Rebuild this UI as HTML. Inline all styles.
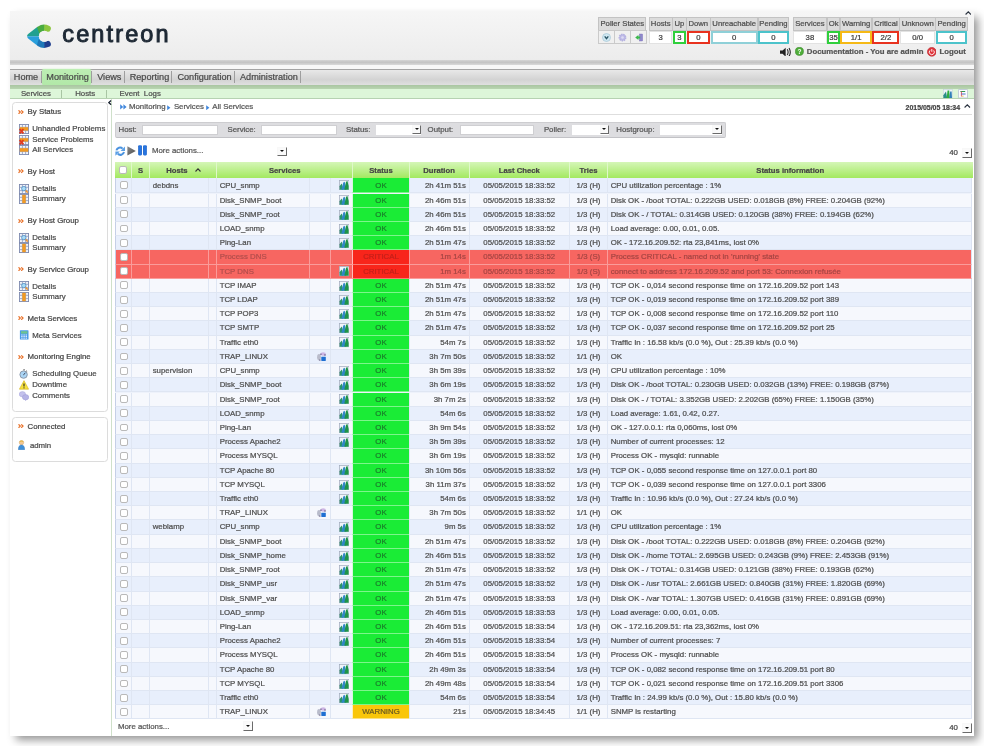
<!DOCTYPE html><html><head><meta charset="utf-8"><title>Centreon - IT &amp; Network Monitoring</title><style>
*{box-sizing:border-box;margin:0;padding:0}
html,body{width:984px;height:746px;overflow:hidden;background:#fff}
body{position:relative;font-family:"Liberation Sans",Arial,Helvetica,sans-serif;font-size:7.83px;color:#4a4a4a;line-height:1;-webkit-text-stroke-width:.22px}
.a{position:absolute;white-space:nowrap}
.win{left:10px;top:10.5px;width:964px;height:725.5px;background:#fff;box-shadow:4.5px 4.5px 8.5px -1px rgba(0,0,0,.42)}
.hdr{left:10px;top:10.5px;width:964px;height:50.5px;background:linear-gradient(#f6f6f6,#ececec)}
.hl1{left:10px;top:60.4px;width:964px;height:4.2px;background:linear-gradient(#d6d6d6,#c3c3c3 45%,#dadada)}
.hl2{left:10px;top:64.6px;width:964px;height:4.6px;background:#f8f8f8}
.menu{left:10px;top:68.9px;width:964px;height:16.3px;background:linear-gradient(#e8e8e8,#d3d3d3 65%,#e0e0e0);border-top:.9px solid #a4a4a4}
.mon{left:41.6px;top:69.4px;width:49.4px;height:15.8px;background:linear-gradient(#bdeeb4,#b2e8a8);border-radius:1.5px;box-shadow:0 0 1.5px #b9ecb0}
.mi{top:71.7px;font-size:9.15px;color:#4a4a4a;line-height:11px}
.msep{top:71.2px;width:1.1px;height:11.6px;background:#9e9e9e}
.dg{left:10px;top:85.2px;width:964px;height:3.7px;background:linear-gradient(#a9c5a1,#b9d5b1)}
.sub{left:10px;top:88.9px;width:964px;height:9.9px;background:#ddf6d9;border-bottom:.8px solid #b6d2b2}
.si{top:89.3px;line-height:9px;color:#4f4f4f}
.ssep{top:90.2px;width:1px;height:7.6px;background:#a9c5a4}
.vline{left:111.2px;top:99px;width:1px;height:637px;background:#cfe0ca}
.box{left:11.6px;width:96.6px;border:1px solid #dcdcdc;border-radius:3.5px;background:#fff}
.sh{left:27.6px;line-height:10px;height:10px;color:#444}
.sa{left:18px;line-height:10px;height:10px;color:#f07820;font-weight:bold;font-size:8.4px}
.st{left:32.2px;line-height:10px;height:10px;color:#4a4a4a}
.ico{left:19.2px;width:10px;height:10px}
.bc{top:102px;line-height:10px;color:#555}
.fbar{left:114.5px;top:121.7px;width:611.4px;height:16.4px;background:#dddde0;border:1px solid #cdcdd0;border-bottom-color:#c2c2c6;border-radius:2px}
.fl{top:124.7px;line-height:10px;color:#555}
.inp{top:124.6px;height:10.6px;background:#fff;border:1px solid #cfcfd2}
.sel{top:124.6px;height:10.6px;background:#fff}
.arr{width:9.6px;height:9.6px;background:#fafafa;border-right:1.2px solid #6a6a6a;border-bottom:1.2px solid #6a6a6a;border-left:.6px solid #f8f8f8;border-top:.6px solid #f8f8f8}
.arr:after{content:"";position:absolute;left:1.7px;top:2.5px;border-left:2.2px solid transparent;border-right:2.2px solid transparent;border-top:2.4px solid #111}
.th{top:161.7px;height:16.0px;background:linear-gradient(#d5f6b8,#a3e960);font-weight:bold;color:#454545;text-align:center;line-height:18.8px;font-size:7.7px;border-left:1px solid #dff8c9}
.r{left:115.4px;width:857.1px}
.r0{background:#e8effc}
.r1{background:#f6f8fd}
.rc{background:#f76661}
.c{position:absolute;top:0;height:100%;border-left:1px solid #dfe6f3;border-bottom:1px solid #dfe6f3;white-space:nowrap;overflow:hidden;color:#4e4e4e}
.rc .c{border-color:#fa9c9a;color:#a54543}
.rc .c.sv{color:#b24e4c}
.c.l{padding-left:2.7px}
.c.ce{text-align:center}
.c.ri{text-align:right;padding-right:2.7px}
.ok{background:#1aec36;color:#1b7e2b;border-left-color:#d9f7df;border-bottom-color:#7df58c}
.cr{background:#f8251b;color:#c4201a !important;border-left-color:#fbb !important;border-bottom-color:#fa7a74 !important}
.wa{background:#f9c60a;color:#6a5a20;border-left-color:#fdf0c0;border-bottom-color:#fbe080}
.cb{position:absolute;left:3.5px;width:7.9px;height:7.8px;border:1px solid #b9b9b9;border-radius:2px;background:#fff}
.g{position:absolute;left:8px;width:10.2px;height:10.2px}
.t{position:absolute;left:7.6px;width:9.5px;height:9.5px}
.hs{top:17.2px;height:13.4px;background:#dcdcdc;border:1px solid #c3c3c3;color:#4e4e4e;text-align:center;line-height:11.6px;font-size:7.7px}
.hv{top:30.8px;height:12.8px;background:#fff;border:1.7px solid #e2e2e2;color:#3c3c3c;text-align:center;line-height:11px;font-size:7.7px}
</style></head><body><div class="a" style="left:0;top:0;width:984px;height:746px;will-change:transform">
<div class="a win"></div><div class="a hdr"></div><div class="a hl1"></div><div class="a hl2"></div><div class="a menu"></div><div class="a mon"></div>
<svg class="a" style="left:25px;top:22.5px" width="28" height="27" viewBox="25 22.5 28 27">
<defs><mask id="lm"><path d="M47.7 28.1 A8.6 8.6 0 0 0 39.4 28.8 L30.4 35.8 L39.4 42.8 A8.6 8.6 0 0 0 47.7 43.5" fill="none" stroke="#fff" stroke-width="6.3" stroke-linejoin="round" stroke-linecap="round"/><polygon points="30.4,35.8 39.4,28.8 39.4,42.8" fill="#fff"/><circle cx="44.3" cy="35.8" r="5.45" fill="#000"/></mask></defs>
<g mask="url(#lm)">
<rect x="25" y="22" width="28" height="13.8" fill="#21a08f"/>
<rect x="25" y="35.8" width="28" height="14" fill="#2a9fdb"/>
<polygon points="35.2,22 44.2,22 44,31 39.6,33.4" fill="#4aab40"/>
<polygon points="44.2,22 53,22 53,35 44,31" fill="#8dc63f"/>
<polygon points="38.6,38.8 44.3,40 44.3,50 35.4,50" fill="#1e78b9"/>
<polygon points="44.3,38 53,36.5 53,50 44.3,50" fill="#1f3e8e"/>
</g></svg>
<div class="a" style="left:62.3px;top:19.4px;font-size:23.5px;line-height:30px;color:#1d2834;letter-spacing:2.12px;-webkit-text-stroke:.95px #1d2834">centreon</div>
<div class="a mi" style="left:13.8px">Home</div>
<div class="a mi" style="left:46.3px">Monitoring</div>
<div class="a mi" style="left:97.2px">Views</div>
<div class="a mi" style="left:129.7px">Reporting</div>
<div class="a mi" style="left:177.4px">Configuration</div>
<div class="a mi" style="left:240px">Administration</div>
<div class="a msep" style="left:40.8px"></div>
<div class="a msep" style="left:90.5px"></div>
<div class="a msep" style="left:123.5px"></div>
<div class="a msep" style="left:170.8px"></div>
<div class="a msep" style="left:233.5px"></div>
<div class="a msep" style="left:300.3px"></div>
<div class="a dg"></div><div class="a sub"></div>
<div class="a si" style="left:20.9px">Services</div>
<div class="a si" style="left:75.2px">Hosts</div>
<div class="a si" style="left:119.5px">Event&nbsp; Logs</div>
<div class="a ssep" style="left:61.1px"></div>
<div class="a ssep" style="left:105.8px"></div>
<div class="a hs" style="left:598.1px;width:48.4px">Poller States</div>
<div class="a hv" style="left:598.1px;top:29.8px;height:14.6px;width:17.1px;background:#f0f0f0;border:1px solid #cacaca"></div>
<div class="a hv" style="left:614.2px;top:29.8px;height:14.6px;width:17.1px;background:#f0f0f0;border:1px solid #cacaca"></div>
<div class="a hv" style="left:630.3px;top:29.8px;height:14.6px;width:17.1px;background:#f0f0f0;border:1px solid #cacaca"></div>
<svg class="a" style="left:601.6px;top:32.6px" width="9" height="9" viewBox="0 0 9 9"><circle cx="4.5" cy="4.5" r="4" fill="#cfe7f1" stroke="#a3c6d6" stroke-width=".7"/><path d="M2.7 3.4 L4.5 5.6 L6.3 3.4" fill="none" stroke="#2a5666" stroke-width="1.4"/></svg>
<svg class="a" style="left:617.7px;top:32.6px" width="9" height="9" viewBox="0 0 9 9"><circle cx="4.5" cy="4.5" r="3.2" fill="#bdb9e6" stroke="#b3afe0" stroke-width="1.5" stroke-dasharray="1.4 .8"/><circle cx="4.5" cy="4.5" r="1.3" fill="#dddbf3"/></svg>
<svg class="a" style="left:633.6px;top:32.6px" width="9.5" height="9" viewBox="0 0 9.5 9"><rect x="5.4" y="1" width="3.2" height="7" fill="#9088cc" stroke="#7a70b8" stroke-width=".4"/><path d="M1.2 4.5 L4.4 2 V3.5 H6.2 V5.5 H4.4 V7 Z" fill="#3ab84c"/></svg>
<div class="a hs" style="left:648.5px;width:24.4px">Hosts</div>
<div class="a hv" style="left:649.0px;width:23.4px;">3</div>
<div class="a hs" style="left:672.3px;width:14.3px">Up</div>
<div class="a hv" style="left:672.8px;width:13.3px;border-color:#2fcf3c;border-width:2px;line-height:10.4px;">3</div>
<div class="a hs" style="left:686px;width:24.6px">Down</div>
<div class="a hv" style="left:686.5px;width:23.6px;border-color:#e8321f;border-width:2px;line-height:10.4px;">0</div>
<div class="a hs" style="left:710px;width:48.3px">Unreachable</div>
<div class="a hv" style="left:710.5px;width:47.3px;border-color:#8fd0d8;border-width:2px;line-height:10.4px;">0</div>
<div class="a hs" style="left:757.7px;width:31.5px">Pending</div>
<div class="a hv" style="left:758.2px;width:30.5px;border-color:#4cc3cb;border-width:2px;line-height:10.4px;">0</div>
<div class="a hs" style="left:792.5px;width:34.8px">Services</div>
<div class="a hv" style="left:793.0px;width:33.8px;">38</div>
<div class="a hs" style="left:826.7px;width:13.8px">Ok</div>
<div class="a hv" style="left:827.2px;width:12.8px;border-color:#2fcf3c;border-width:2px;line-height:10.4px;">35</div>
<div class="a hs" style="left:839.9px;width:32.5px">Warning</div>
<div class="a hv" style="left:840.4px;width:31.5px;border-color:#f5b916;border-width:2px;line-height:10.4px;">1/1</div>
<div class="a hs" style="left:871.8px;width:28.2px">Critical</div>
<div class="a hv" style="left:872.3px;width:27.2px;border-color:#e8321f;border-width:2px;line-height:10.4px;">2/2</div>
<div class="a hs" style="left:899.4px;width:36.6px">Unknown</div>
<div class="a hv" style="left:899.9px;width:35.6px;">0/0</div>
<div class="a hs" style="left:935.4px;width:32.4px">Pending</div>
<div class="a hv" style="left:935.9px;width:31.4px;border-color:#4cc3cb;border-width:2px;line-height:10.4px;">0</div>
<svg class="a" style="left:964.6px;top:11.4px" width="6.6" height="4" viewBox="0 0 6.6 4"><path d="M.6 3.5 L3.3 .8 L6 3.5" fill="none" stroke="#2a3340" stroke-width="1.1"/></svg>
<svg class="a" style="left:780.2px;top:47.4px" width="11.6" height="9" viewBox="0 0 9 7"><path d="M0 2.7 H2 L4.4 .5 V7.5 L2 5.3 H0Z" fill="#222"/><path d="M5.6 1.8 Q7 4 5.6 6.2 M7 .8 Q9 4 7 7.2" fill="none" stroke="#222" stroke-width=".8"/></svg>
<svg class="a" style="left:795.4px;top:47.4px" width="8.8" height="8.8" viewBox="0 0 8.6 8.6"><circle cx="4.3" cy="4.3" r="4" fill="#4fae3a" stroke="#357f28" stroke-width=".5"/><text x="4.3" y="6.6" font-size="6.4" font-weight="bold" text-anchor="middle" fill="#fff" font-family="Liberation Sans, sans-serif">?</text></svg>
<div class="a" style="left:806.8px;top:47px;line-height:10px;font-weight:bold;color:#555;font-size:7.8px">Documentation - You are admin</div>
<svg class="a" style="left:926.6px;top:47.2px" width="9.6" height="9.6" viewBox="0 0 9.6 9.6"><circle cx="4.8" cy="4.8" r="4.4" fill="#e0353b" stroke="#b52228" stroke-width=".6"/><path d="M3 3.4 A2.5 2.5 0 1 0 6.6 3.4" fill="none" stroke="#fff" stroke-width=".9"/><path d="M4.8 2 V4.8" stroke="#fff" stroke-width=".9"/></svg>
<div class="a" style="left:939.5px;top:47px;line-height:10px;font-weight:bold;color:#555;font-size:7.8px">Logout</div>
<svg class="a" style="left:943.4px;top:89.4px" width="10" height="9" viewBox="0 0 10 9"><rect x=".3" y=".3" width="9" height="8.6" fill="#eef3f8" stroke="#b6c6d6" stroke-width=".4"/><path d="M.4 9 V6.2 L3 2.6 L4.2 9Z" fill="#2a8f86"/><path d="M3.6 9 L4.6 1.6 H6.2 L6.8 9Z" fill="#2fae3e"/><path d="M6.2 9 L7.2 2.6 H8.6 L9 9Z" fill="#2f7fb8"/></svg>
<svg class="a" style="left:957.6px;top:89.4px" width="10" height="9" viewBox="0 0 10 9"><rect x=".4" y=".4" width="9.2" height="8.6" rx="1" fill="#fbfcfe" stroke="#a9b3cc" stroke-width=".7"/><path d="M2.4 2.5 H7.2" stroke="#2f9a4e" stroke-width="1"/><path d="M3.4 2.5 V7.4" stroke="#d8455a" stroke-width=".9"/><path d="M3.4 5 H7.6" stroke="#3a62c4" stroke-width=".9"/><path d="M3.4 7.2 H5.6" stroke="#e8c050" stroke-width=".9"/></svg>
<div class="a vline"></div>
<div class="a box" style="top:102.2px;height:309.8px"></div>
<div class="a box" style="top:417px;height:45.2px"></div>
<svg class="a" style="left:108.2px;top:99.8px" width="3.6" height="5.2" viewBox="0 0 3.6 5.2"><path d="M3.1 .5 L.8 2.6 L3.1 4.7" fill="none" stroke="#141e2c" stroke-width="1.3"/></svg>
<svg class="a" style="left:18px;top:110.0px" width="5.8" height="4.2" viewBox="0 0 5.8 4.2"><path d="M.5 .4 L2.3 2.1 L.5 3.8 M3.2 .4 L5 2.1 L3.2 3.8" fill="none" stroke="#e9722a" stroke-width="1.25"/></svg><div class="a sh" style="top:107.4px">By Status</div>
<svg class="a ico" style="top:123.9px" viewBox="0 0 10 10"><rect x=".45" y=".45" width="9.1" height="9.1" fill="#f4f6fb" stroke="#7e8aae" stroke-width=".9"/><path d="M.4 3.3H9.6M.4 6.6H9.6M3.4 .4V9.6M6.6 .4V9.6" stroke="#8c98ba" stroke-width=".8"/><rect x=".8" y="3.2" width="8.4" height="3.4" fill="#f29a22"/><path d="M.6 5 L4.4 9.4 M4.4 5 L.6 9.4" stroke="#e23a1e" stroke-width="1.9"/></svg>
<div class="a st" style="top:124.2px">Unhandled Problems</div>
<svg class="a ico" style="top:134.6px" viewBox="0 0 10 10"><rect x=".45" y=".45" width="9.1" height="9.1" fill="#f4f6fb" stroke="#7e8aae" stroke-width=".9"/><path d="M.4 3.3H9.6M.4 6.6H9.6M3.4 .4V9.6M6.6 .4V9.6" stroke="#8c98ba" stroke-width=".8"/><rect x=".8" y="3.2" width="8.4" height="3.4" fill="#f29a22"/><path d="M.6 5 L4.4 9.4 M4.4 5 L.6 9.4" stroke="#e23a1e" stroke-width="1.9"/></svg>
<div class="a st" style="top:134.9px">Service Problems</div>
<svg class="a ico" style="top:145.1px" viewBox="0 0 10 10"><rect x=".45" y=".45" width="9.1" height="9.1" fill="#f4f6fb" stroke="#7e8aae" stroke-width=".9"/><path d="M.4 3.3H9.6M.4 6.6H9.6M3.4 .4V9.6M6.6 .4V9.6" stroke="#8c98ba" stroke-width=".8"/><rect x=".8" y="3.2" width="8.4" height="3.5" fill="#f29a22"/></svg>
<div class="a st" style="top:145.4px">All Services</div>
<svg class="a" style="left:18px;top:169.4px" width="5.8" height="4.2" viewBox="0 0 5.8 4.2"><path d="M.5 .4 L2.3 2.1 L.5 3.8 M3.2 .4 L5 2.1 L3.2 3.8" fill="none" stroke="#e9722a" stroke-width="1.25"/></svg><div class="a sh" style="top:166.8px">By Host</div>
<svg class="a ico" style="top:183.5px" viewBox="0 0 10 10"><rect x=".45" y=".45" width="9.1" height="9.1" fill="#f4f6fb" stroke="#7e8aae" stroke-width=".9"/><path d="M.4 3.3H9.6M.4 6.6H9.6M3.4 .4V9.6M6.6 .4V9.6" stroke="#8c98ba" stroke-width=".8"/><circle cx="4.8" cy="4.6" r="2.2" fill="#a9dcf6" stroke="#4f8fc8" stroke-width=".8"/><path d="M6.6 6.4 L8.8 8.6" stroke="#e8963a" stroke-width="1.5"/></svg>
<div class="a st" style="top:183.8px">Details</div>
<svg class="a ico" style="top:194.1px" viewBox="0 0 10 10"><rect x=".45" y=".45" width="9.1" height="9.1" fill="#f4f6fb" stroke="#7e8aae" stroke-width=".9"/><path d="M.4 3.3H9.6M.4 6.6H9.6M3.4 .4V9.6M6.6 .4V9.6" stroke="#8c98ba" stroke-width=".8"/><rect x="3.3" y=".8" width="3.4" height="8.4" fill="#f29a22"/></svg>
<div class="a st" style="top:194.4px">Summary</div>
<svg class="a" style="left:18px;top:218.5px" width="5.8" height="4.2" viewBox="0 0 5.8 4.2"><path d="M.5 .4 L2.3 2.1 L.5 3.8 M3.2 .4 L5 2.1 L3.2 3.8" fill="none" stroke="#e9722a" stroke-width="1.25"/></svg><div class="a sh" style="top:215.9px">By Host Group</div>
<svg class="a ico" style="top:232.6px" viewBox="0 0 10 10"><rect x=".45" y=".45" width="9.1" height="9.1" fill="#f4f6fb" stroke="#7e8aae" stroke-width=".9"/><path d="M.4 3.3H9.6M.4 6.6H9.6M3.4 .4V9.6M6.6 .4V9.6" stroke="#8c98ba" stroke-width=".8"/><circle cx="4.8" cy="4.6" r="2.2" fill="#a9dcf6" stroke="#4f8fc8" stroke-width=".8"/><path d="M6.6 6.4 L8.8 8.6" stroke="#e8963a" stroke-width="1.5"/></svg>
<div class="a st" style="top:232.9px">Details</div>
<svg class="a ico" style="top:243.1px" viewBox="0 0 10 10"><rect x=".45" y=".45" width="9.1" height="9.1" fill="#f4f6fb" stroke="#7e8aae" stroke-width=".9"/><path d="M.4 3.3H9.6M.4 6.6H9.6M3.4 .4V9.6M6.6 .4V9.6" stroke="#8c98ba" stroke-width=".8"/><rect x="3.3" y=".8" width="3.4" height="8.4" fill="#f29a22"/></svg>
<div class="a st" style="top:243.4px">Summary</div>
<svg class="a" style="left:18px;top:267.2px" width="5.8" height="4.2" viewBox="0 0 5.8 4.2"><path d="M.5 .4 L2.3 2.1 L.5 3.8 M3.2 .4 L5 2.1 L3.2 3.8" fill="none" stroke="#e9722a" stroke-width="1.25"/></svg><div class="a sh" style="top:264.6px">By Service Group</div>
<svg class="a ico" style="top:281.3px" viewBox="0 0 10 10"><rect x=".45" y=".45" width="9.1" height="9.1" fill="#f4f6fb" stroke="#7e8aae" stroke-width=".9"/><path d="M.4 3.3H9.6M.4 6.6H9.6M3.4 .4V9.6M6.6 .4V9.6" stroke="#8c98ba" stroke-width=".8"/><circle cx="4.8" cy="4.6" r="2.2" fill="#a9dcf6" stroke="#4f8fc8" stroke-width=".8"/><path d="M6.6 6.4 L8.8 8.6" stroke="#e8963a" stroke-width="1.5"/></svg>
<div class="a st" style="top:281.6px">Details</div>
<svg class="a ico" style="top:292px" viewBox="0 0 10 10"><rect x=".45" y=".45" width="9.1" height="9.1" fill="#f4f6fb" stroke="#7e8aae" stroke-width=".9"/><path d="M.4 3.3H9.6M.4 6.6H9.6M3.4 .4V9.6M6.6 .4V9.6" stroke="#8c98ba" stroke-width=".8"/><rect x="3.3" y=".8" width="3.4" height="8.4" fill="#f29a22"/></svg>
<div class="a st" style="top:292.3px">Summary</div>
<svg class="a" style="left:18px;top:316.3px" width="5.8" height="4.2" viewBox="0 0 5.8 4.2"><path d="M.5 .4 L2.3 2.1 L.5 3.8 M3.2 .4 L5 2.1 L3.2 3.8" fill="none" stroke="#e9722a" stroke-width="1.25"/></svg><div class="a sh" style="top:313.7px">Meta Services</div>
<svg class="a ico" style="top:330.4px" viewBox="0 0 10 10"><rect x=".9" y=".2" width="8.6" height="9.4" rx=".6" fill="#4a9ae8"/><rect x="2" y="1.2" width="6.4" height="2.4" fill="#6fc48e"/><path d="M2.2 5H8.2M2.2 6.6H8.2M2.2 8.2H8.2" stroke="#eaf4fd" stroke-width="1" stroke-dasharray="1.4 .8"/></svg>
<div class="a st" style="top:330.7px">Meta Services</div>
<svg class="a" style="left:18px;top:354.9px" width="5.8" height="4.2" viewBox="0 0 5.8 4.2"><path d="M.5 .4 L2.3 2.1 L.5 3.8 M3.2 .4 L5 2.1 L3.2 3.8" fill="none" stroke="#e9722a" stroke-width="1.25"/></svg><div class="a sh" style="top:352.3px">Monitoring Engine</div>
<svg class="a ico" style="top:368.9px" viewBox="0 0 10 10"><circle cx="4.6" cy="5.6" r="3.7" fill="#aad4f4" stroke="#8a98aa" stroke-width="1"/><path d="M4.2 .8 H6 M7 1.6 L8.2 2.6" stroke="#777" stroke-width="1"/><path d="M4.4 5.8 L6.4 4" stroke="#223" stroke-width=".9"/></svg>
<div class="a st" style="top:369.2px">Scheduling Queue</div>
<svg class="a ico" style="top:379.7px" viewBox="0 0 10 10"><path d="M5 .6 L9.6 9.2 H.4Z" fill="#f6e23e" stroke="#d4b420" stroke-width=".6" stroke-linejoin="round"/><path d="M5 3.4V6.4" stroke="#222" stroke-width="1.1"/><circle cx="5" cy="7.8" r=".6" fill="#222"/></svg>
<div class="a st" style="top:380.0px">Downtime</div>
<svg class="a ico" style="top:390.5px" viewBox="0 0 10 10"><ellipse cx="3.4" cy="3.2" rx="3.2" ry="2.6" fill="#c4c2ec" stroke="#a8a6dc" stroke-width=".5"/><ellipse cx="6.6" cy="6.2" rx="3.2" ry="2.6" fill="#b6b4e6" stroke="#9c9ad6" stroke-width=".5"/><path d="M6 8.4 L6.6 10 L7.8 8.4Z" fill="#a8a6dc"/></svg>
<div class="a st" style="top:390.8px">Comments</div>
<svg class="a" style="left:18px;top:424.2px" width="5.8" height="4.2" viewBox="0 0 5.8 4.2"><path d="M.5 .4 L2.3 2.1 L.5 3.8 M3.2 .4 L5 2.1 L3.2 3.8" fill="none" stroke="#e9722a" stroke-width="1.25"/></svg><div class="a sh" style="top:421.6px">Connected</div>
<svg class="a" style="left:18.4px;top:439.8px" width="7" height="10" viewBox="0 0 7 10"><circle cx="3.5" cy="2.6" r="2.2" fill="#f3c893" stroke="#c9904a" stroke-width=".4"/><path d="M.3 9.7 Q.3 5 3.5 5 Q6.7 5 6.7 9.7Z" fill="#3f8fd8" stroke="#2a6fb0" stroke-width=".4"/><path d="M1.2 2 Q3.5 -.8 5.8 2 Q3.5 1 1.2 2Z" fill="#e0b53a"/></svg>
<div class="a st" style="left:29.9px;top:440.8px">admin</div>
<svg class="a" style="left:119.8px;top:104.4px" width="6.8" height="5.8" viewBox="0 0 6.8 5.8"><path d="M.2 .2 L3.2 2.9 L.2 5.6Z M3.4 .2 L6.6 2.9 L3.4 5.6Z" fill="#3f86dc"/></svg>
<div class="a bc" style="left:129px">Monitoring</div>
<svg class="a" style="left:167.4px;top:104.6px" width="3.6" height="5.4" viewBox="0 0 3.6 5.4"><path d="M.2 .2 L3.4 2.7 L.2 5.2Z" fill="#3f86dc"/></svg>
<div class="a bc" style="left:173.9px">Services</div>
<svg class="a" style="left:206.2px;top:104.6px" width="3.6" height="5.4" viewBox="0 0 3.6 5.4"><path d="M.2 .2 L3.4 2.7 L.2 5.2Z" fill="#3f86dc"/></svg>
<div class="a bc" style="left:212.3px">All Services</div>
<div class="a" style="left:905.6px;top:103.2px;line-height:10px;font-weight:bold;font-size:6.95px;color:#444">2015/05/05 18:34</div>
<svg class="a" style="left:964.4px;top:103.6px" width="6.6" height="4" viewBox="0 0 6.6 4"><path d="M.6 3.5 L3.3 .8 L6 3.5" fill="none" stroke="#2a3340" stroke-width="1.1"/></svg>
<div class="a" style="left:114.6px;top:114px;width:857.6px;height:1px;background:#dedede"></div>
<div class="a fbar"></div>
<div class="a fl" style="left:118.5px">Host:</div>
<div class="a fl" style="left:227.5px">Service:</div>
<div class="a fl" style="left:346.1px">Status:</div>
<div class="a fl" style="left:427.6px">Output:</div>
<div class="a fl" style="left:543.9px">Poller:</div>
<div class="a fl" style="left:616.3px">Hostgroup:</div>
<div class="a inp" style="left:142.1px;width:75.6px"></div>
<div class="a inp" style="left:261.4px;width:75.2px"></div>
<div class="a inp" style="left:459.6px;width:74.1px"></div>
<div class="a sel" style="left:375.6px;width:45.9px"></div><div class="a arr" style="left:411.9px;top:124.8px"></div>
<div class="a sel" style="left:571.8px;width:37.6px"></div><div class="a arr" style="left:599.8px;top:124.8px"></div>
<div class="a sel" style="left:659.7px;width:62.3px"></div><div class="a arr" style="left:712.4px;top:124.8px"></div>
<svg class="a" style="left:115px;top:145.6px" width="10.4" height="10.4" viewBox="0 0 10.4 10.4"><path d="M1.4 4.4 A3.7 3.7 0 0 1 7.6 2.6" fill="none" stroke="#4b93df" stroke-width="2"/><path d="M10 .6 V5 H5.6Z" fill="#5a9fe6"/><path d="M9 6 A3.7 3.7 0 0 1 2.8 7.8" fill="none" stroke="#4b93df" stroke-width="2"/><path d="M.4 9.8 V5.4 H4.8Z" fill="#5a9fe6"/></svg>
<svg class="a" style="left:127.2px;top:146px" width="9" height="9.8" viewBox="0 0 9 9.8"><defs><linearGradient id="plg" x1="0" x2="1" y1="0" y2="1"><stop offset="0" stop-color="#8a8a8a"/><stop offset="1" stop-color="#4c4c4c"/></linearGradient></defs><path d="M.4 .2 L8.8 4.9 L.4 9.6Z" fill="url(#plg)"/></svg>
<svg class="a" style="left:138.3px;top:145.4px" width="9" height="10.6" viewBox="0 0 9 10.4" preserveAspectRatio="none"><defs><linearGradient id="pg" x1="0" x2="1" y1="0" y2="0"><stop offset="0" stop-color="#0f57c4"/><stop offset=".5" stop-color="#2f80ea"/><stop offset="1" stop-color="#0f57c4"/></linearGradient></defs><rect x=".2" y=".2" width="3.7" height="10" rx="1" fill="url(#pg)"/><rect x="5.1" y=".2" width="3.7" height="10" rx="1" fill="url(#pg)"/></svg>
<div class="a" style="left:152px;top:146.3px;line-height:10px;color:#555">More actions...</div>
<div class="a arr" style="left:277.2px;top:146.6px"></div>
<div class="a" style="left:949.2px;top:147.6px;line-height:10px;color:#444">40</div>
<div class="a arr" style="left:962.4px;top:148.2px"></div>
<div class="a" style="left:118px;top:721.9px;line-height:10px;color:#555">More actions...</div>
<div class="a arr" style="left:243.2px;top:721.4px"></div>
<div class="a" style="left:949.2px;top:722.8px;line-height:10px;color:#444">40</div>
<div class="a arr" style="left:962.4px;top:723.3px"></div>
<div class="a th" style="left:115.4px;width:15.6px;border-left:none"><span class="cb" style="top:4.3px"></span></div>
<div class="a th" style="left:131.0px;width:18.0px;">S</div>
<div class="a th" style="left:149.0px;width:67.0px;padding-left:1px">Hosts <svg width="6" height="4" viewBox="0 0 6 4" style="margin-left:5px;margin-bottom:1px"><path d="M.5 3.5 L3 .9 L5.5 3.5" fill="none" stroke="#333" stroke-width="1.1"/></svg></div>
<div class="a th" style="left:216.0px;width:136.4px;">Services</div>
<div class="a th" style="left:352.4px;width:56.2px;">Status</div>
<div class="a th" style="left:408.6px;width:60.0px;">Duration</div>
<div class="a th" style="left:468.6px;width:100.4px;">Last Check</div>
<div class="a th" style="left:569.0px;width:38.0px;">Tries</div>
<div class="a th" style="left:607.0px;width:365.5px;">Status information</div>
<div class="a" style="left:115.4px;top:177.7px;width:857.1px;height:541.25px;background:#eef2fb"></div>
<div class="a r r0" style="top:177.70px;height:15.8px;line-height:16.00px">
<div class="c " style="left:0.0px;width:15.6px;border-left-color:#c5cfe6"><span class="cb" style="top:3.50px"></span></div>
<div class="c " style="left:15.6px;width:18.0px;"></div>
<div class="c l" style="left:33.6px;width:58.7px;">debdns</div>
<div class="c " style="left:92.3px;width:8.3px;"></div>
<div class="c l sv" style="left:100.6px;width:92.8px;">CPU_snmp</div>
<div class="c " style="left:193.4px;width:20.9px;"></div>
<div class="c " style="left:214.3px;width:22.7px;"><svg class="g" style="top:2.60px" viewBox="0 0 10.4 11" preserveAspectRatio="none"><rect x=".3" y=".3" width="9.8" height="10.4" fill="#f1f4fa" stroke="#a8b4c8" stroke-width=".5"/><path d="M.5 10.6 V6.8 L2.8 3.8 L4.8 10.6Z" fill="#2a9468"/><path d="M2.4 10.6 L4.4 2.6 L5.8 1.8 L7.6 10.6Z" fill="#2f86c6"/><path d="M5.4 10.6 L7.2 2 L8.6 1.2 L9.9 6.5 V10.6Z" fill="#1f9448"/><path d="M.3 .3 H10.1 M.3 .3 V10.7" stroke="#9098ac" stroke-width=".5" fill="none"/></svg></div>
<div class="c ce ok" style="left:237.0px;width:56.2px;">OK</div>
<div class="c ri" style="left:293.2px;width:60.0px;">2h 41m 51s</div>
<div class="c ce" style="left:353.2px;width:100.4px;">05/05/2015 18:33:52</div>
<div class="c ce" style="left:453.6px;width:38.0px;">1/3 (H)</div>
<div class="c l" style="left:491.6px;width:365.5px;border-right:1px solid #dbe2f1">CPU utilization percentage : 1%</div>
</div>
<div class="a r r1" style="top:193.50px;height:14.215px;line-height:13.81px">
<div class="c " style="left:0.0px;width:15.6px;border-left-color:#c5cfe6"><span class="cb" style="top:2.71px"></span></div>
<div class="c " style="left:15.6px;width:18.0px;"></div>
<div class="c l" style="left:33.6px;width:58.7px;"></div>
<div class="c " style="left:92.3px;width:8.3px;"></div>
<div class="c l sv" style="left:100.6px;width:92.8px;">Disk_SNMP_boot</div>
<div class="c " style="left:193.4px;width:20.9px;"></div>
<div class="c " style="left:214.3px;width:22.7px;"><svg class="g" style="top:1.81px" viewBox="0 0 10.4 11" preserveAspectRatio="none"><rect x=".3" y=".3" width="9.8" height="10.4" fill="#f1f4fa" stroke="#a8b4c8" stroke-width=".5"/><path d="M.5 10.6 V6.8 L2.8 3.8 L4.8 10.6Z" fill="#2a9468"/><path d="M2.4 10.6 L4.4 2.6 L5.8 1.8 L7.6 10.6Z" fill="#2f86c6"/><path d="M5.4 10.6 L7.2 2 L8.6 1.2 L9.9 6.5 V10.6Z" fill="#1f9448"/><path d="M.3 .3 H10.1 M.3 .3 V10.7" stroke="#9098ac" stroke-width=".5" fill="none"/></svg></div>
<div class="c ce ok" style="left:237.0px;width:56.2px;">OK</div>
<div class="c ri" style="left:293.2px;width:60.0px;">2h 46m 51s</div>
<div class="c ce" style="left:353.2px;width:100.4px;">05/05/2015 18:33:52</div>
<div class="c ce" style="left:453.6px;width:38.0px;">1/3 (H)</div>
<div class="c l" style="left:491.6px;width:365.5px;border-right:1px solid #dbe2f1">Disk OK - /boot TOTAL: 0.222GB USED: 0.018GB (8%) FREE: 0.204GB (92%)</div>
</div>
<div class="a r r0" style="top:207.72px;height:14.215px;line-height:13.81px">
<div class="c " style="left:0.0px;width:15.6px;border-left-color:#c5cfe6"><span class="cb" style="top:2.71px"></span></div>
<div class="c " style="left:15.6px;width:18.0px;"></div>
<div class="c l" style="left:33.6px;width:58.7px;"></div>
<div class="c " style="left:92.3px;width:8.3px;"></div>
<div class="c l sv" style="left:100.6px;width:92.8px;">Disk_SNMP_root</div>
<div class="c " style="left:193.4px;width:20.9px;"></div>
<div class="c " style="left:214.3px;width:22.7px;"><svg class="g" style="top:1.81px" viewBox="0 0 10.4 11" preserveAspectRatio="none"><rect x=".3" y=".3" width="9.8" height="10.4" fill="#f1f4fa" stroke="#a8b4c8" stroke-width=".5"/><path d="M.5 10.6 V6.8 L2.8 3.8 L4.8 10.6Z" fill="#2a9468"/><path d="M2.4 10.6 L4.4 2.6 L5.8 1.8 L7.6 10.6Z" fill="#2f86c6"/><path d="M5.4 10.6 L7.2 2 L8.6 1.2 L9.9 6.5 V10.6Z" fill="#1f9448"/><path d="M.3 .3 H10.1 M.3 .3 V10.7" stroke="#9098ac" stroke-width=".5" fill="none"/></svg></div>
<div class="c ce ok" style="left:237.0px;width:56.2px;">OK</div>
<div class="c ri" style="left:293.2px;width:60.0px;">2h 46m 51s</div>
<div class="c ce" style="left:353.2px;width:100.4px;">05/05/2015 18:33:52</div>
<div class="c ce" style="left:453.6px;width:38.0px;">1/3 (H)</div>
<div class="c l" style="left:491.6px;width:365.5px;border-right:1px solid #dbe2f1">Disk OK - / TOTAL: 0.314GB USED: 0.120GB (38%) FREE: 0.194GB (62%)</div>
</div>
<div class="a r r1" style="top:221.93px;height:14.215px;line-height:13.81px">
<div class="c " style="left:0.0px;width:15.6px;border-left-color:#c5cfe6"><span class="cb" style="top:2.71px"></span></div>
<div class="c " style="left:15.6px;width:18.0px;"></div>
<div class="c l" style="left:33.6px;width:58.7px;"></div>
<div class="c " style="left:92.3px;width:8.3px;"></div>
<div class="c l sv" style="left:100.6px;width:92.8px;">LOAD_snmp</div>
<div class="c " style="left:193.4px;width:20.9px;"></div>
<div class="c " style="left:214.3px;width:22.7px;"><svg class="g" style="top:1.81px" viewBox="0 0 10.4 11" preserveAspectRatio="none"><rect x=".3" y=".3" width="9.8" height="10.4" fill="#f1f4fa" stroke="#a8b4c8" stroke-width=".5"/><path d="M.5 10.6 V6.8 L2.8 3.8 L4.8 10.6Z" fill="#2a9468"/><path d="M2.4 10.6 L4.4 2.6 L5.8 1.8 L7.6 10.6Z" fill="#2f86c6"/><path d="M5.4 10.6 L7.2 2 L8.6 1.2 L9.9 6.5 V10.6Z" fill="#1f9448"/><path d="M.3 .3 H10.1 M.3 .3 V10.7" stroke="#9098ac" stroke-width=".5" fill="none"/></svg></div>
<div class="c ce ok" style="left:237.0px;width:56.2px;">OK</div>
<div class="c ri" style="left:293.2px;width:60.0px;">2h 46m 51s</div>
<div class="c ce" style="left:353.2px;width:100.4px;">05/05/2015 18:33:52</div>
<div class="c ce" style="left:453.6px;width:38.0px;">1/3 (H)</div>
<div class="c l" style="left:491.6px;width:365.5px;border-right:1px solid #dbe2f1">Load average: 0.00, 0.01, 0.05.</div>
</div>
<div class="a r r0" style="top:236.15px;height:14.215px;line-height:13.81px">
<div class="c " style="left:0.0px;width:15.6px;border-left-color:#c5cfe6"><span class="cb" style="top:2.71px"></span></div>
<div class="c " style="left:15.6px;width:18.0px;"></div>
<div class="c l" style="left:33.6px;width:58.7px;"></div>
<div class="c " style="left:92.3px;width:8.3px;"></div>
<div class="c l sv" style="left:100.6px;width:92.8px;">Ping-Lan</div>
<div class="c " style="left:193.4px;width:20.9px;"></div>
<div class="c " style="left:214.3px;width:22.7px;"><svg class="g" style="top:1.81px" viewBox="0 0 10.4 11" preserveAspectRatio="none"><rect x=".3" y=".3" width="9.8" height="10.4" fill="#f1f4fa" stroke="#a8b4c8" stroke-width=".5"/><path d="M.5 10.6 V6.8 L2.8 3.8 L4.8 10.6Z" fill="#2a9468"/><path d="M2.4 10.6 L4.4 2.6 L5.8 1.8 L7.6 10.6Z" fill="#2f86c6"/><path d="M5.4 10.6 L7.2 2 L8.6 1.2 L9.9 6.5 V10.6Z" fill="#1f9448"/><path d="M.3 .3 H10.1 M.3 .3 V10.7" stroke="#9098ac" stroke-width=".5" fill="none"/></svg></div>
<div class="c ce ok" style="left:237.0px;width:56.2px;">OK</div>
<div class="c ri" style="left:293.2px;width:60.0px;">2h 51m 47s</div>
<div class="c ce" style="left:353.2px;width:100.4px;">05/05/2015 18:33:52</div>
<div class="c ce" style="left:453.6px;width:38.0px;">1/3 (H)</div>
<div class="c l" style="left:491.6px;width:365.5px;border-right:1px solid #dbe2f1">OK - 172.16.209.52: rta 23,841ms, lost 0%</div>
</div>
<div class="a r rc" style="top:250.36px;height:14.215px;line-height:13.81px">
<div class="c " style="left:0.0px;width:15.6px;border-left-color:#c5cfe6"><span class="cb" style="top:2.71px"></span></div>
<div class="c " style="left:15.6px;width:18.0px;"></div>
<div class="c l" style="left:33.6px;width:58.7px;"></div>
<div class="c " style="left:92.3px;width:8.3px;"></div>
<div class="c l sv" style="left:100.6px;width:92.8px;">Process DNS</div>
<div class="c " style="left:193.4px;width:20.9px;"></div>
<div class="c " style="left:214.3px;width:22.7px;"></div>
<div class="c ce cr" style="left:237.0px;width:56.2px;">CRITICAL</div>
<div class="c ri" style="left:293.2px;width:60.0px;">1m 14s</div>
<div class="c ce" style="left:353.2px;width:100.4px;">05/05/2015 18:33:52</div>
<div class="c ce" style="left:453.6px;width:38.0px;">1/3 (S)</div>
<div class="c l" style="left:491.6px;width:365.5px;border-right:1px solid #dbe2f1">Process CRITICAL - named not in 'running' state</div>
</div>
<div class="a r rc" style="top:264.57px;height:14.215px;line-height:13.81px">
<div class="c " style="left:0.0px;width:15.6px;border-left-color:#c5cfe6"><span class="cb" style="top:2.71px"></span></div>
<div class="c " style="left:15.6px;width:18.0px;"></div>
<div class="c l" style="left:33.6px;width:58.7px;"></div>
<div class="c " style="left:92.3px;width:8.3px;"></div>
<div class="c l sv" style="left:100.6px;width:92.8px;">TCP DNS</div>
<div class="c " style="left:193.4px;width:20.9px;"></div>
<div class="c " style="left:214.3px;width:22.7px;"><svg class="g" style="top:1.81px" viewBox="0 0 10.4 11" preserveAspectRatio="none"><rect x=".3" y=".3" width="9.8" height="10.4" fill="#f1f4fa" stroke="#a8b4c8" stroke-width=".5"/><path d="M.5 10.6 V6.8 L2.8 3.8 L4.8 10.6Z" fill="#2a9468"/><path d="M2.4 10.6 L4.4 2.6 L5.8 1.8 L7.6 10.6Z" fill="#2f86c6"/><path d="M5.4 10.6 L7.2 2 L8.6 1.2 L9.9 6.5 V10.6Z" fill="#1f9448"/><path d="M.3 .3 H10.1 M.3 .3 V10.7" stroke="#9098ac" stroke-width=".5" fill="none"/></svg></div>
<div class="c ce cr" style="left:237.0px;width:56.2px;">CRITICAL</div>
<div class="c ri" style="left:293.2px;width:60.0px;">1m 14s</div>
<div class="c ce" style="left:353.2px;width:100.4px;">05/05/2015 18:33:52</div>
<div class="c ce" style="left:453.6px;width:38.0px;">1/3 (S)</div>
<div class="c l" style="left:491.6px;width:365.5px;border-right:1px solid #dbe2f1">connect to address 172.16.209.52 and port 53: Connexion refusée</div>
</div>
<div class="a r r1" style="top:278.79px;height:14.215px;line-height:13.81px">
<div class="c " style="left:0.0px;width:15.6px;border-left-color:#c5cfe6"><span class="cb" style="top:2.71px"></span></div>
<div class="c " style="left:15.6px;width:18.0px;"></div>
<div class="c l" style="left:33.6px;width:58.7px;"></div>
<div class="c " style="left:92.3px;width:8.3px;"></div>
<div class="c l sv" style="left:100.6px;width:92.8px;">TCP IMAP</div>
<div class="c " style="left:193.4px;width:20.9px;"></div>
<div class="c " style="left:214.3px;width:22.7px;"><svg class="g" style="top:1.81px" viewBox="0 0 10.4 11" preserveAspectRatio="none"><rect x=".3" y=".3" width="9.8" height="10.4" fill="#f1f4fa" stroke="#a8b4c8" stroke-width=".5"/><path d="M.5 10.6 V6.8 L2.8 3.8 L4.8 10.6Z" fill="#2a9468"/><path d="M2.4 10.6 L4.4 2.6 L5.8 1.8 L7.6 10.6Z" fill="#2f86c6"/><path d="M5.4 10.6 L7.2 2 L8.6 1.2 L9.9 6.5 V10.6Z" fill="#1f9448"/><path d="M.3 .3 H10.1 M.3 .3 V10.7" stroke="#9098ac" stroke-width=".5" fill="none"/></svg></div>
<div class="c ce ok" style="left:237.0px;width:56.2px;">OK</div>
<div class="c ri" style="left:293.2px;width:60.0px;">2h 51m 47s</div>
<div class="c ce" style="left:353.2px;width:100.4px;">05/05/2015 18:33:52</div>
<div class="c ce" style="left:453.6px;width:38.0px;">1/3 (H)</div>
<div class="c l" style="left:491.6px;width:365.5px;border-right:1px solid #dbe2f1">TCP OK - 0,014 second response time on 172.16.209.52 port 143</div>
</div>
<div class="a r r0" style="top:293.00px;height:14.215px;line-height:13.81px">
<div class="c " style="left:0.0px;width:15.6px;border-left-color:#c5cfe6"><span class="cb" style="top:2.71px"></span></div>
<div class="c " style="left:15.6px;width:18.0px;"></div>
<div class="c l" style="left:33.6px;width:58.7px;"></div>
<div class="c " style="left:92.3px;width:8.3px;"></div>
<div class="c l sv" style="left:100.6px;width:92.8px;">TCP LDAP</div>
<div class="c " style="left:193.4px;width:20.9px;"></div>
<div class="c " style="left:214.3px;width:22.7px;"><svg class="g" style="top:1.81px" viewBox="0 0 10.4 11" preserveAspectRatio="none"><rect x=".3" y=".3" width="9.8" height="10.4" fill="#f1f4fa" stroke="#a8b4c8" stroke-width=".5"/><path d="M.5 10.6 V6.8 L2.8 3.8 L4.8 10.6Z" fill="#2a9468"/><path d="M2.4 10.6 L4.4 2.6 L5.8 1.8 L7.6 10.6Z" fill="#2f86c6"/><path d="M5.4 10.6 L7.2 2 L8.6 1.2 L9.9 6.5 V10.6Z" fill="#1f9448"/><path d="M.3 .3 H10.1 M.3 .3 V10.7" stroke="#9098ac" stroke-width=".5" fill="none"/></svg></div>
<div class="c ce ok" style="left:237.0px;width:56.2px;">OK</div>
<div class="c ri" style="left:293.2px;width:60.0px;">2h 51m 47s</div>
<div class="c ce" style="left:353.2px;width:100.4px;">05/05/2015 18:33:52</div>
<div class="c ce" style="left:453.6px;width:38.0px;">1/3 (H)</div>
<div class="c l" style="left:491.6px;width:365.5px;border-right:1px solid #dbe2f1">TCP OK - 0,019 second response time on 172.16.209.52 port 389</div>
</div>
<div class="a r r1" style="top:307.22px;height:14.215px;line-height:13.81px">
<div class="c " style="left:0.0px;width:15.6px;border-left-color:#c5cfe6"><span class="cb" style="top:2.71px"></span></div>
<div class="c " style="left:15.6px;width:18.0px;"></div>
<div class="c l" style="left:33.6px;width:58.7px;"></div>
<div class="c " style="left:92.3px;width:8.3px;"></div>
<div class="c l sv" style="left:100.6px;width:92.8px;">TCP POP3</div>
<div class="c " style="left:193.4px;width:20.9px;"></div>
<div class="c " style="left:214.3px;width:22.7px;"><svg class="g" style="top:1.81px" viewBox="0 0 10.4 11" preserveAspectRatio="none"><rect x=".3" y=".3" width="9.8" height="10.4" fill="#f1f4fa" stroke="#a8b4c8" stroke-width=".5"/><path d="M.5 10.6 V6.8 L2.8 3.8 L4.8 10.6Z" fill="#2a9468"/><path d="M2.4 10.6 L4.4 2.6 L5.8 1.8 L7.6 10.6Z" fill="#2f86c6"/><path d="M5.4 10.6 L7.2 2 L8.6 1.2 L9.9 6.5 V10.6Z" fill="#1f9448"/><path d="M.3 .3 H10.1 M.3 .3 V10.7" stroke="#9098ac" stroke-width=".5" fill="none"/></svg></div>
<div class="c ce ok" style="left:237.0px;width:56.2px;">OK</div>
<div class="c ri" style="left:293.2px;width:60.0px;">2h 51m 47s</div>
<div class="c ce" style="left:353.2px;width:100.4px;">05/05/2015 18:33:52</div>
<div class="c ce" style="left:453.6px;width:38.0px;">1/3 (H)</div>
<div class="c l" style="left:491.6px;width:365.5px;border-right:1px solid #dbe2f1">TCP OK - 0,008 second response time on 172.16.209.52 port 110</div>
</div>
<div class="a r r0" style="top:321.43px;height:14.215px;line-height:13.81px">
<div class="c " style="left:0.0px;width:15.6px;border-left-color:#c5cfe6"><span class="cb" style="top:2.71px"></span></div>
<div class="c " style="left:15.6px;width:18.0px;"></div>
<div class="c l" style="left:33.6px;width:58.7px;"></div>
<div class="c " style="left:92.3px;width:8.3px;"></div>
<div class="c l sv" style="left:100.6px;width:92.8px;">TCP SMTP</div>
<div class="c " style="left:193.4px;width:20.9px;"></div>
<div class="c " style="left:214.3px;width:22.7px;"><svg class="g" style="top:1.81px" viewBox="0 0 10.4 11" preserveAspectRatio="none"><rect x=".3" y=".3" width="9.8" height="10.4" fill="#f1f4fa" stroke="#a8b4c8" stroke-width=".5"/><path d="M.5 10.6 V6.8 L2.8 3.8 L4.8 10.6Z" fill="#2a9468"/><path d="M2.4 10.6 L4.4 2.6 L5.8 1.8 L7.6 10.6Z" fill="#2f86c6"/><path d="M5.4 10.6 L7.2 2 L8.6 1.2 L9.9 6.5 V10.6Z" fill="#1f9448"/><path d="M.3 .3 H10.1 M.3 .3 V10.7" stroke="#9098ac" stroke-width=".5" fill="none"/></svg></div>
<div class="c ce ok" style="left:237.0px;width:56.2px;">OK</div>
<div class="c ri" style="left:293.2px;width:60.0px;">2h 51m 47s</div>
<div class="c ce" style="left:353.2px;width:100.4px;">05/05/2015 18:33:52</div>
<div class="c ce" style="left:453.6px;width:38.0px;">1/3 (H)</div>
<div class="c l" style="left:491.6px;width:365.5px;border-right:1px solid #dbe2f1">TCP OK - 0,037 second response time on 172.16.209.52 port 25</div>
</div>
<div class="a r r1" style="top:335.65px;height:14.215px;line-height:13.81px">
<div class="c " style="left:0.0px;width:15.6px;border-left-color:#c5cfe6"><span class="cb" style="top:2.71px"></span></div>
<div class="c " style="left:15.6px;width:18.0px;"></div>
<div class="c l" style="left:33.6px;width:58.7px;"></div>
<div class="c " style="left:92.3px;width:8.3px;"></div>
<div class="c l sv" style="left:100.6px;width:92.8px;">Traffic eth0</div>
<div class="c " style="left:193.4px;width:20.9px;"></div>
<div class="c " style="left:214.3px;width:22.7px;"><svg class="g" style="top:1.81px" viewBox="0 0 10.4 11" preserveAspectRatio="none"><rect x=".3" y=".3" width="9.8" height="10.4" fill="#f1f4fa" stroke="#a8b4c8" stroke-width=".5"/><path d="M.5 10.6 V6.8 L2.8 3.8 L4.8 10.6Z" fill="#2a9468"/><path d="M2.4 10.6 L4.4 2.6 L5.8 1.8 L7.6 10.6Z" fill="#2f86c6"/><path d="M5.4 10.6 L7.2 2 L8.6 1.2 L9.9 6.5 V10.6Z" fill="#1f9448"/><path d="M.3 .3 H10.1 M.3 .3 V10.7" stroke="#9098ac" stroke-width=".5" fill="none"/></svg></div>
<div class="c ce ok" style="left:237.0px;width:56.2px;">OK</div>
<div class="c ri" style="left:293.2px;width:60.0px;">54m 7s</div>
<div class="c ce" style="left:353.2px;width:100.4px;">05/05/2015 18:33:52</div>
<div class="c ce" style="left:453.6px;width:38.0px;">1/3 (H)</div>
<div class="c l" style="left:491.6px;width:365.5px;border-right:1px solid #dbe2f1">Traffic In : 16.58 kb/s (0.0 %), Out : 25.39 kb/s (0.0 %)</div>
</div>
<div class="a r r0" style="top:349.86px;height:14.215px;line-height:13.81px">
<div class="c " style="left:0.0px;width:15.6px;border-left-color:#c5cfe6"><span class="cb" style="top:2.71px"></span></div>
<div class="c " style="left:15.6px;width:18.0px;"></div>
<div class="c l" style="left:33.6px;width:58.7px;"></div>
<div class="c " style="left:92.3px;width:8.3px;"></div>
<div class="c l sv" style="left:100.6px;width:92.8px;">TRAP_LINUX</div>
<div class="c " style="left:193.4px;width:20.9px;"><svg class="t" style="top:2.06px" viewBox="0 0 9.5 9.5"><ellipse cx="2" cy="5.2" rx="1.9" ry="3.1" fill="#b9bccb"/><ellipse cx="6.2" cy="2" rx="2.7" ry="1.7" fill="#cdb6e4"/><circle cx="3.9" cy="2.2" r=".6" fill="#4a3a6a"/><circle cx="8" cy="3" r=".7" fill="#4a3a6a"/><circle cx="2.9" cy="8.1" r=".6" fill="#3a2a5a"/><rect x="4.3" y="4.7" width="4.5" height="4.2" rx=".4" fill="#1f6fd2"/></svg></div>
<div class="c " style="left:214.3px;width:22.7px;"></div>
<div class="c ce ok" style="left:237.0px;width:56.2px;">OK</div>
<div class="c ri" style="left:293.2px;width:60.0px;">3h 7m 50s</div>
<div class="c ce" style="left:353.2px;width:100.4px;">05/05/2015 18:33:52</div>
<div class="c ce" style="left:453.6px;width:38.0px;">1/1 (H)</div>
<div class="c l" style="left:491.6px;width:365.5px;border-right:1px solid #dbe2f1">OK</div>
</div>
<div class="a r r1" style="top:364.08px;height:14.215px;line-height:13.81px">
<div class="c " style="left:0.0px;width:15.6px;border-left-color:#c5cfe6"><span class="cb" style="top:2.71px"></span></div>
<div class="c " style="left:15.6px;width:18.0px;"></div>
<div class="c l" style="left:33.6px;width:58.7px;">supervision</div>
<div class="c " style="left:92.3px;width:8.3px;"></div>
<div class="c l sv" style="left:100.6px;width:92.8px;">CPU_snmp</div>
<div class="c " style="left:193.4px;width:20.9px;"></div>
<div class="c " style="left:214.3px;width:22.7px;"><svg class="g" style="top:1.81px" viewBox="0 0 10.4 11" preserveAspectRatio="none"><rect x=".3" y=".3" width="9.8" height="10.4" fill="#f1f4fa" stroke="#a8b4c8" stroke-width=".5"/><path d="M.5 10.6 V6.8 L2.8 3.8 L4.8 10.6Z" fill="#2a9468"/><path d="M2.4 10.6 L4.4 2.6 L5.8 1.8 L7.6 10.6Z" fill="#2f86c6"/><path d="M5.4 10.6 L7.2 2 L8.6 1.2 L9.9 6.5 V10.6Z" fill="#1f9448"/><path d="M.3 .3 H10.1 M.3 .3 V10.7" stroke="#9098ac" stroke-width=".5" fill="none"/></svg></div>
<div class="c ce ok" style="left:237.0px;width:56.2px;">OK</div>
<div class="c ri" style="left:293.2px;width:60.0px;">3h 5m 39s</div>
<div class="c ce" style="left:353.2px;width:100.4px;">05/05/2015 18:33:52</div>
<div class="c ce" style="left:453.6px;width:38.0px;">1/3 (H)</div>
<div class="c l" style="left:491.6px;width:365.5px;border-right:1px solid #dbe2f1">CPU utilization percentage : 10%</div>
</div>
<div class="a r r0" style="top:378.29px;height:14.215px;line-height:13.81px">
<div class="c " style="left:0.0px;width:15.6px;border-left-color:#c5cfe6"><span class="cb" style="top:2.71px"></span></div>
<div class="c " style="left:15.6px;width:18.0px;"></div>
<div class="c l" style="left:33.6px;width:58.7px;"></div>
<div class="c " style="left:92.3px;width:8.3px;"></div>
<div class="c l sv" style="left:100.6px;width:92.8px;">Disk_SNMP_boot</div>
<div class="c " style="left:193.4px;width:20.9px;"></div>
<div class="c " style="left:214.3px;width:22.7px;"><svg class="g" style="top:1.81px" viewBox="0 0 10.4 11" preserveAspectRatio="none"><rect x=".3" y=".3" width="9.8" height="10.4" fill="#f1f4fa" stroke="#a8b4c8" stroke-width=".5"/><path d="M.5 10.6 V6.8 L2.8 3.8 L4.8 10.6Z" fill="#2a9468"/><path d="M2.4 10.6 L4.4 2.6 L5.8 1.8 L7.6 10.6Z" fill="#2f86c6"/><path d="M5.4 10.6 L7.2 2 L8.6 1.2 L9.9 6.5 V10.6Z" fill="#1f9448"/><path d="M.3 .3 H10.1 M.3 .3 V10.7" stroke="#9098ac" stroke-width=".5" fill="none"/></svg></div>
<div class="c ce ok" style="left:237.0px;width:56.2px;">OK</div>
<div class="c ri" style="left:293.2px;width:60.0px;">3h 6m 19s</div>
<div class="c ce" style="left:353.2px;width:100.4px;">05/05/2015 18:33:52</div>
<div class="c ce" style="left:453.6px;width:38.0px;">1/3 (H)</div>
<div class="c l" style="left:491.6px;width:365.5px;border-right:1px solid #dbe2f1">Disk OK - /boot TOTAL: 0.230GB USED: 0.032GB (13%) FREE: 0.198GB (87%)</div>
</div>
<div class="a r r1" style="top:392.51px;height:14.215px;line-height:13.81px">
<div class="c " style="left:0.0px;width:15.6px;border-left-color:#c5cfe6"><span class="cb" style="top:2.71px"></span></div>
<div class="c " style="left:15.6px;width:18.0px;"></div>
<div class="c l" style="left:33.6px;width:58.7px;"></div>
<div class="c " style="left:92.3px;width:8.3px;"></div>
<div class="c l sv" style="left:100.6px;width:92.8px;">Disk_SNMP_root</div>
<div class="c " style="left:193.4px;width:20.9px;"></div>
<div class="c " style="left:214.3px;width:22.7px;"><svg class="g" style="top:1.81px" viewBox="0 0 10.4 11" preserveAspectRatio="none"><rect x=".3" y=".3" width="9.8" height="10.4" fill="#f1f4fa" stroke="#a8b4c8" stroke-width=".5"/><path d="M.5 10.6 V6.8 L2.8 3.8 L4.8 10.6Z" fill="#2a9468"/><path d="M2.4 10.6 L4.4 2.6 L5.8 1.8 L7.6 10.6Z" fill="#2f86c6"/><path d="M5.4 10.6 L7.2 2 L8.6 1.2 L9.9 6.5 V10.6Z" fill="#1f9448"/><path d="M.3 .3 H10.1 M.3 .3 V10.7" stroke="#9098ac" stroke-width=".5" fill="none"/></svg></div>
<div class="c ce ok" style="left:237.0px;width:56.2px;">OK</div>
<div class="c ri" style="left:293.2px;width:60.0px;">3h 7m 2s</div>
<div class="c ce" style="left:353.2px;width:100.4px;">05/05/2015 18:33:52</div>
<div class="c ce" style="left:453.6px;width:38.0px;">1/3 (H)</div>
<div class="c l" style="left:491.6px;width:365.5px;border-right:1px solid #dbe2f1">Disk OK - / TOTAL: 3.352GB USED: 2.202GB (65%) FREE: 1.150GB (35%)</div>
</div>
<div class="a r r0" style="top:406.72px;height:14.215px;line-height:13.81px">
<div class="c " style="left:0.0px;width:15.6px;border-left-color:#c5cfe6"><span class="cb" style="top:2.71px"></span></div>
<div class="c " style="left:15.6px;width:18.0px;"></div>
<div class="c l" style="left:33.6px;width:58.7px;"></div>
<div class="c " style="left:92.3px;width:8.3px;"></div>
<div class="c l sv" style="left:100.6px;width:92.8px;">LOAD_snmp</div>
<div class="c " style="left:193.4px;width:20.9px;"></div>
<div class="c " style="left:214.3px;width:22.7px;"><svg class="g" style="top:1.81px" viewBox="0 0 10.4 11" preserveAspectRatio="none"><rect x=".3" y=".3" width="9.8" height="10.4" fill="#f1f4fa" stroke="#a8b4c8" stroke-width=".5"/><path d="M.5 10.6 V6.8 L2.8 3.8 L4.8 10.6Z" fill="#2a9468"/><path d="M2.4 10.6 L4.4 2.6 L5.8 1.8 L7.6 10.6Z" fill="#2f86c6"/><path d="M5.4 10.6 L7.2 2 L8.6 1.2 L9.9 6.5 V10.6Z" fill="#1f9448"/><path d="M.3 .3 H10.1 M.3 .3 V10.7" stroke="#9098ac" stroke-width=".5" fill="none"/></svg></div>
<div class="c ce ok" style="left:237.0px;width:56.2px;">OK</div>
<div class="c ri" style="left:293.2px;width:60.0px;">54m 6s</div>
<div class="c ce" style="left:353.2px;width:100.4px;">05/05/2015 18:33:52</div>
<div class="c ce" style="left:453.6px;width:38.0px;">1/3 (H)</div>
<div class="c l" style="left:491.6px;width:365.5px;border-right:1px solid #dbe2f1">Load average: 1.61, 0.42, 0.27.</div>
</div>
<div class="a r r1" style="top:420.94px;height:14.215px;line-height:13.81px">
<div class="c " style="left:0.0px;width:15.6px;border-left-color:#c5cfe6"><span class="cb" style="top:2.71px"></span></div>
<div class="c " style="left:15.6px;width:18.0px;"></div>
<div class="c l" style="left:33.6px;width:58.7px;"></div>
<div class="c " style="left:92.3px;width:8.3px;"></div>
<div class="c l sv" style="left:100.6px;width:92.8px;">Ping-Lan</div>
<div class="c " style="left:193.4px;width:20.9px;"></div>
<div class="c " style="left:214.3px;width:22.7px;"><svg class="g" style="top:1.81px" viewBox="0 0 10.4 11" preserveAspectRatio="none"><rect x=".3" y=".3" width="9.8" height="10.4" fill="#f1f4fa" stroke="#a8b4c8" stroke-width=".5"/><path d="M.5 10.6 V6.8 L2.8 3.8 L4.8 10.6Z" fill="#2a9468"/><path d="M2.4 10.6 L4.4 2.6 L5.8 1.8 L7.6 10.6Z" fill="#2f86c6"/><path d="M5.4 10.6 L7.2 2 L8.6 1.2 L9.9 6.5 V10.6Z" fill="#1f9448"/><path d="M.3 .3 H10.1 M.3 .3 V10.7" stroke="#9098ac" stroke-width=".5" fill="none"/></svg></div>
<div class="c ce ok" style="left:237.0px;width:56.2px;">OK</div>
<div class="c ri" style="left:293.2px;width:60.0px;">3h 9m 54s</div>
<div class="c ce" style="left:353.2px;width:100.4px;">05/05/2015 18:33:52</div>
<div class="c ce" style="left:453.6px;width:38.0px;">1/3 (H)</div>
<div class="c l" style="left:491.6px;width:365.5px;border-right:1px solid #dbe2f1">OK - 127.0.0.1: rta 0,060ms, lost 0%</div>
</div>
<div class="a r r0" style="top:435.15px;height:14.215px;line-height:13.81px">
<div class="c " style="left:0.0px;width:15.6px;border-left-color:#c5cfe6"><span class="cb" style="top:2.71px"></span></div>
<div class="c " style="left:15.6px;width:18.0px;"></div>
<div class="c l" style="left:33.6px;width:58.7px;"></div>
<div class="c " style="left:92.3px;width:8.3px;"></div>
<div class="c l sv" style="left:100.6px;width:92.8px;">Process Apache2</div>
<div class="c " style="left:193.4px;width:20.9px;"></div>
<div class="c " style="left:214.3px;width:22.7px;"><svg class="g" style="top:1.81px" viewBox="0 0 10.4 11" preserveAspectRatio="none"><rect x=".3" y=".3" width="9.8" height="10.4" fill="#f1f4fa" stroke="#a8b4c8" stroke-width=".5"/><path d="M.5 10.6 V6.8 L2.8 3.8 L4.8 10.6Z" fill="#2a9468"/><path d="M2.4 10.6 L4.4 2.6 L5.8 1.8 L7.6 10.6Z" fill="#2f86c6"/><path d="M5.4 10.6 L7.2 2 L8.6 1.2 L9.9 6.5 V10.6Z" fill="#1f9448"/><path d="M.3 .3 H10.1 M.3 .3 V10.7" stroke="#9098ac" stroke-width=".5" fill="none"/></svg></div>
<div class="c ce ok" style="left:237.0px;width:56.2px;">OK</div>
<div class="c ri" style="left:293.2px;width:60.0px;">3h 5m 39s</div>
<div class="c ce" style="left:353.2px;width:100.4px;">05/05/2015 18:33:52</div>
<div class="c ce" style="left:453.6px;width:38.0px;">1/3 (H)</div>
<div class="c l" style="left:491.6px;width:365.5px;border-right:1px solid #dbe2f1">Number of current processes: 12</div>
</div>
<div class="a r r1" style="top:449.37px;height:14.215px;line-height:13.81px">
<div class="c " style="left:0.0px;width:15.6px;border-left-color:#c5cfe6"><span class="cb" style="top:2.71px"></span></div>
<div class="c " style="left:15.6px;width:18.0px;"></div>
<div class="c l" style="left:33.6px;width:58.7px;"></div>
<div class="c " style="left:92.3px;width:8.3px;"></div>
<div class="c l sv" style="left:100.6px;width:92.8px;">Process MYSQL</div>
<div class="c " style="left:193.4px;width:20.9px;"></div>
<div class="c " style="left:214.3px;width:22.7px;"></div>
<div class="c ce ok" style="left:237.0px;width:56.2px;">OK</div>
<div class="c ri" style="left:293.2px;width:60.0px;">3h 6m 19s</div>
<div class="c ce" style="left:353.2px;width:100.4px;">05/05/2015 18:33:52</div>
<div class="c ce" style="left:453.6px;width:38.0px;">1/3 (H)</div>
<div class="c l" style="left:491.6px;width:365.5px;border-right:1px solid #dbe2f1">Process OK - mysqld: runnable</div>
</div>
<div class="a r r0" style="top:463.58px;height:14.215px;line-height:13.81px">
<div class="c " style="left:0.0px;width:15.6px;border-left-color:#c5cfe6"><span class="cb" style="top:2.71px"></span></div>
<div class="c " style="left:15.6px;width:18.0px;"></div>
<div class="c l" style="left:33.6px;width:58.7px;"></div>
<div class="c " style="left:92.3px;width:8.3px;"></div>
<div class="c l sv" style="left:100.6px;width:92.8px;">TCP Apache 80</div>
<div class="c " style="left:193.4px;width:20.9px;"></div>
<div class="c " style="left:214.3px;width:22.7px;"><svg class="g" style="top:1.81px" viewBox="0 0 10.4 11" preserveAspectRatio="none"><rect x=".3" y=".3" width="9.8" height="10.4" fill="#f1f4fa" stroke="#a8b4c8" stroke-width=".5"/><path d="M.5 10.6 V6.8 L2.8 3.8 L4.8 10.6Z" fill="#2a9468"/><path d="M2.4 10.6 L4.4 2.6 L5.8 1.8 L7.6 10.6Z" fill="#2f86c6"/><path d="M5.4 10.6 L7.2 2 L8.6 1.2 L9.9 6.5 V10.6Z" fill="#1f9448"/><path d="M.3 .3 H10.1 M.3 .3 V10.7" stroke="#9098ac" stroke-width=".5" fill="none"/></svg></div>
<div class="c ce ok" style="left:237.0px;width:56.2px;">OK</div>
<div class="c ri" style="left:293.2px;width:60.0px;">3h 10m 56s</div>
<div class="c ce" style="left:353.2px;width:100.4px;">05/05/2015 18:33:52</div>
<div class="c ce" style="left:453.6px;width:38.0px;">1/3 (H)</div>
<div class="c l" style="left:491.6px;width:365.5px;border-right:1px solid #dbe2f1">TCP OK - 0,055 second response time on 127.0.0.1 port 80</div>
</div>
<div class="a r r1" style="top:477.80px;height:14.215px;line-height:13.81px">
<div class="c " style="left:0.0px;width:15.6px;border-left-color:#c5cfe6"><span class="cb" style="top:2.71px"></span></div>
<div class="c " style="left:15.6px;width:18.0px;"></div>
<div class="c l" style="left:33.6px;width:58.7px;"></div>
<div class="c " style="left:92.3px;width:8.3px;"></div>
<div class="c l sv" style="left:100.6px;width:92.8px;">TCP MYSQL</div>
<div class="c " style="left:193.4px;width:20.9px;"></div>
<div class="c " style="left:214.3px;width:22.7px;"><svg class="g" style="top:1.81px" viewBox="0 0 10.4 11" preserveAspectRatio="none"><rect x=".3" y=".3" width="9.8" height="10.4" fill="#f1f4fa" stroke="#a8b4c8" stroke-width=".5"/><path d="M.5 10.6 V6.8 L2.8 3.8 L4.8 10.6Z" fill="#2a9468"/><path d="M2.4 10.6 L4.4 2.6 L5.8 1.8 L7.6 10.6Z" fill="#2f86c6"/><path d="M5.4 10.6 L7.2 2 L8.6 1.2 L9.9 6.5 V10.6Z" fill="#1f9448"/><path d="M.3 .3 H10.1 M.3 .3 V10.7" stroke="#9098ac" stroke-width=".5" fill="none"/></svg></div>
<div class="c ce ok" style="left:237.0px;width:56.2px;">OK</div>
<div class="c ri" style="left:293.2px;width:60.0px;">3h 11m 37s</div>
<div class="c ce" style="left:353.2px;width:100.4px;">05/05/2015 18:33:52</div>
<div class="c ce" style="left:453.6px;width:38.0px;">1/3 (H)</div>
<div class="c l" style="left:491.6px;width:365.5px;border-right:1px solid #dbe2f1">TCP OK - 0,039 second response time on 127.0.0.1 port 3306</div>
</div>
<div class="a r r0" style="top:492.01px;height:14.215px;line-height:13.81px">
<div class="c " style="left:0.0px;width:15.6px;border-left-color:#c5cfe6"><span class="cb" style="top:2.71px"></span></div>
<div class="c " style="left:15.6px;width:18.0px;"></div>
<div class="c l" style="left:33.6px;width:58.7px;"></div>
<div class="c " style="left:92.3px;width:8.3px;"></div>
<div class="c l sv" style="left:100.6px;width:92.8px;">Traffic eth0</div>
<div class="c " style="left:193.4px;width:20.9px;"></div>
<div class="c " style="left:214.3px;width:22.7px;"><svg class="g" style="top:1.81px" viewBox="0 0 10.4 11" preserveAspectRatio="none"><rect x=".3" y=".3" width="9.8" height="10.4" fill="#f1f4fa" stroke="#a8b4c8" stroke-width=".5"/><path d="M.5 10.6 V6.8 L2.8 3.8 L4.8 10.6Z" fill="#2a9468"/><path d="M2.4 10.6 L4.4 2.6 L5.8 1.8 L7.6 10.6Z" fill="#2f86c6"/><path d="M5.4 10.6 L7.2 2 L8.6 1.2 L9.9 6.5 V10.6Z" fill="#1f9448"/><path d="M.3 .3 H10.1 M.3 .3 V10.7" stroke="#9098ac" stroke-width=".5" fill="none"/></svg></div>
<div class="c ce ok" style="left:237.0px;width:56.2px;">OK</div>
<div class="c ri" style="left:293.2px;width:60.0px;">54m 6s</div>
<div class="c ce" style="left:353.2px;width:100.4px;">05/05/2015 18:33:52</div>
<div class="c ce" style="left:453.6px;width:38.0px;">1/3 (H)</div>
<div class="c l" style="left:491.6px;width:365.5px;border-right:1px solid #dbe2f1">Traffic In : 10.96 kb/s (0.0 %), Out : 27.24 kb/s (0.0 %)</div>
</div>
<div class="a r r1" style="top:506.23px;height:14.215px;line-height:13.81px">
<div class="c " style="left:0.0px;width:15.6px;border-left-color:#c5cfe6"><span class="cb" style="top:2.71px"></span></div>
<div class="c " style="left:15.6px;width:18.0px;"></div>
<div class="c l" style="left:33.6px;width:58.7px;"></div>
<div class="c " style="left:92.3px;width:8.3px;"></div>
<div class="c l sv" style="left:100.6px;width:92.8px;">TRAP_LINUX</div>
<div class="c " style="left:193.4px;width:20.9px;"><svg class="t" style="top:2.06px" viewBox="0 0 9.5 9.5"><ellipse cx="2" cy="5.2" rx="1.9" ry="3.1" fill="#b9bccb"/><ellipse cx="6.2" cy="2" rx="2.7" ry="1.7" fill="#cdb6e4"/><circle cx="3.9" cy="2.2" r=".6" fill="#4a3a6a"/><circle cx="8" cy="3" r=".7" fill="#4a3a6a"/><circle cx="2.9" cy="8.1" r=".6" fill="#3a2a5a"/><rect x="4.3" y="4.7" width="4.5" height="4.2" rx=".4" fill="#1f6fd2"/></svg></div>
<div class="c " style="left:214.3px;width:22.7px;"></div>
<div class="c ce ok" style="left:237.0px;width:56.2px;">OK</div>
<div class="c ri" style="left:293.2px;width:60.0px;">3h 7m 50s</div>
<div class="c ce" style="left:353.2px;width:100.4px;">05/05/2015 18:33:52</div>
<div class="c ce" style="left:453.6px;width:38.0px;">1/1 (H)</div>
<div class="c l" style="left:491.6px;width:365.5px;border-right:1px solid #dbe2f1">OK</div>
</div>
<div class="a r r0" style="top:520.44px;height:14.215px;line-height:13.81px">
<div class="c " style="left:0.0px;width:15.6px;border-left-color:#c5cfe6"><span class="cb" style="top:2.71px"></span></div>
<div class="c " style="left:15.6px;width:18.0px;"></div>
<div class="c l" style="left:33.6px;width:58.7px;">weblamp</div>
<div class="c " style="left:92.3px;width:8.3px;"></div>
<div class="c l sv" style="left:100.6px;width:92.8px;">CPU_snmp</div>
<div class="c " style="left:193.4px;width:20.9px;"></div>
<div class="c " style="left:214.3px;width:22.7px;"><svg class="g" style="top:1.81px" viewBox="0 0 10.4 11" preserveAspectRatio="none"><rect x=".3" y=".3" width="9.8" height="10.4" fill="#f1f4fa" stroke="#a8b4c8" stroke-width=".5"/><path d="M.5 10.6 V6.8 L2.8 3.8 L4.8 10.6Z" fill="#2a9468"/><path d="M2.4 10.6 L4.4 2.6 L5.8 1.8 L7.6 10.6Z" fill="#2f86c6"/><path d="M5.4 10.6 L7.2 2 L8.6 1.2 L9.9 6.5 V10.6Z" fill="#1f9448"/><path d="M.3 .3 H10.1 M.3 .3 V10.7" stroke="#9098ac" stroke-width=".5" fill="none"/></svg></div>
<div class="c ce ok" style="left:237.0px;width:56.2px;">OK</div>
<div class="c ri" style="left:293.2px;width:60.0px;">9m 5s</div>
<div class="c ce" style="left:353.2px;width:100.4px;">05/05/2015 18:33:52</div>
<div class="c ce" style="left:453.6px;width:38.0px;">1/3 (H)</div>
<div class="c l" style="left:491.6px;width:365.5px;border-right:1px solid #dbe2f1">CPU utilization percentage : 1%</div>
</div>
<div class="a r r1" style="top:534.66px;height:14.215px;line-height:13.81px">
<div class="c " style="left:0.0px;width:15.6px;border-left-color:#c5cfe6"><span class="cb" style="top:2.71px"></span></div>
<div class="c " style="left:15.6px;width:18.0px;"></div>
<div class="c l" style="left:33.6px;width:58.7px;"></div>
<div class="c " style="left:92.3px;width:8.3px;"></div>
<div class="c l sv" style="left:100.6px;width:92.8px;">Disk_SNMP_boot</div>
<div class="c " style="left:193.4px;width:20.9px;"></div>
<div class="c " style="left:214.3px;width:22.7px;"><svg class="g" style="top:1.81px" viewBox="0 0 10.4 11" preserveAspectRatio="none"><rect x=".3" y=".3" width="9.8" height="10.4" fill="#f1f4fa" stroke="#a8b4c8" stroke-width=".5"/><path d="M.5 10.6 V6.8 L2.8 3.8 L4.8 10.6Z" fill="#2a9468"/><path d="M2.4 10.6 L4.4 2.6 L5.8 1.8 L7.6 10.6Z" fill="#2f86c6"/><path d="M5.4 10.6 L7.2 2 L8.6 1.2 L9.9 6.5 V10.6Z" fill="#1f9448"/><path d="M.3 .3 H10.1 M.3 .3 V10.7" stroke="#9098ac" stroke-width=".5" fill="none"/></svg></div>
<div class="c ce ok" style="left:237.0px;width:56.2px;">OK</div>
<div class="c ri" style="left:293.2px;width:60.0px;">2h 51m 47s</div>
<div class="c ce" style="left:353.2px;width:100.4px;">05/05/2015 18:33:52</div>
<div class="c ce" style="left:453.6px;width:38.0px;">1/3 (H)</div>
<div class="c l" style="left:491.6px;width:365.5px;border-right:1px solid #dbe2f1">Disk OK - /boot TOTAL: 0.222GB USED: 0.018GB (8%) FREE: 0.204GB (92%)</div>
</div>
<div class="a r r0" style="top:548.87px;height:14.215px;line-height:13.81px">
<div class="c " style="left:0.0px;width:15.6px;border-left-color:#c5cfe6"><span class="cb" style="top:2.71px"></span></div>
<div class="c " style="left:15.6px;width:18.0px;"></div>
<div class="c l" style="left:33.6px;width:58.7px;"></div>
<div class="c " style="left:92.3px;width:8.3px;"></div>
<div class="c l sv" style="left:100.6px;width:92.8px;">Disk_SNMP_home</div>
<div class="c " style="left:193.4px;width:20.9px;"></div>
<div class="c " style="left:214.3px;width:22.7px;"><svg class="g" style="top:1.81px" viewBox="0 0 10.4 11" preserveAspectRatio="none"><rect x=".3" y=".3" width="9.8" height="10.4" fill="#f1f4fa" stroke="#a8b4c8" stroke-width=".5"/><path d="M.5 10.6 V6.8 L2.8 3.8 L4.8 10.6Z" fill="#2a9468"/><path d="M2.4 10.6 L4.4 2.6 L5.8 1.8 L7.6 10.6Z" fill="#2f86c6"/><path d="M5.4 10.6 L7.2 2 L8.6 1.2 L9.9 6.5 V10.6Z" fill="#1f9448"/><path d="M.3 .3 H10.1 M.3 .3 V10.7" stroke="#9098ac" stroke-width=".5" fill="none"/></svg></div>
<div class="c ce ok" style="left:237.0px;width:56.2px;">OK</div>
<div class="c ri" style="left:293.2px;width:60.0px;">2h 46m 51s</div>
<div class="c ce" style="left:353.2px;width:100.4px;">05/05/2015 18:33:52</div>
<div class="c ce" style="left:453.6px;width:38.0px;">1/3 (H)</div>
<div class="c l" style="left:491.6px;width:365.5px;border-right:1px solid #dbe2f1">Disk OK - /home TOTAL: 2.695GB USED: 0.243GB (9%) FREE: 2.453GB (91%)</div>
</div>
<div class="a r r1" style="top:563.09px;height:14.215px;line-height:13.81px">
<div class="c " style="left:0.0px;width:15.6px;border-left-color:#c5cfe6"><span class="cb" style="top:2.71px"></span></div>
<div class="c " style="left:15.6px;width:18.0px;"></div>
<div class="c l" style="left:33.6px;width:58.7px;"></div>
<div class="c " style="left:92.3px;width:8.3px;"></div>
<div class="c l sv" style="left:100.6px;width:92.8px;">Disk_SNMP_root</div>
<div class="c " style="left:193.4px;width:20.9px;"></div>
<div class="c " style="left:214.3px;width:22.7px;"><svg class="g" style="top:1.81px" viewBox="0 0 10.4 11" preserveAspectRatio="none"><rect x=".3" y=".3" width="9.8" height="10.4" fill="#f1f4fa" stroke="#a8b4c8" stroke-width=".5"/><path d="M.5 10.6 V6.8 L2.8 3.8 L4.8 10.6Z" fill="#2a9468"/><path d="M2.4 10.6 L4.4 2.6 L5.8 1.8 L7.6 10.6Z" fill="#2f86c6"/><path d="M5.4 10.6 L7.2 2 L8.6 1.2 L9.9 6.5 V10.6Z" fill="#1f9448"/><path d="M.3 .3 H10.1 M.3 .3 V10.7" stroke="#9098ac" stroke-width=".5" fill="none"/></svg></div>
<div class="c ce ok" style="left:237.0px;width:56.2px;">OK</div>
<div class="c ri" style="left:293.2px;width:60.0px;">2h 51m 47s</div>
<div class="c ce" style="left:353.2px;width:100.4px;">05/05/2015 18:33:52</div>
<div class="c ce" style="left:453.6px;width:38.0px;">1/3 (H)</div>
<div class="c l" style="left:491.6px;width:365.5px;border-right:1px solid #dbe2f1">Disk OK - / TOTAL: 0.314GB USED: 0.121GB (38%) FREE: 0.193GB (62%)</div>
</div>
<div class="a r r0" style="top:577.30px;height:14.215px;line-height:13.81px">
<div class="c " style="left:0.0px;width:15.6px;border-left-color:#c5cfe6"><span class="cb" style="top:2.71px"></span></div>
<div class="c " style="left:15.6px;width:18.0px;"></div>
<div class="c l" style="left:33.6px;width:58.7px;"></div>
<div class="c " style="left:92.3px;width:8.3px;"></div>
<div class="c l sv" style="left:100.6px;width:92.8px;">Disk_SNMP_usr</div>
<div class="c " style="left:193.4px;width:20.9px;"></div>
<div class="c " style="left:214.3px;width:22.7px;"><svg class="g" style="top:1.81px" viewBox="0 0 10.4 11" preserveAspectRatio="none"><rect x=".3" y=".3" width="9.8" height="10.4" fill="#f1f4fa" stroke="#a8b4c8" stroke-width=".5"/><path d="M.5 10.6 V6.8 L2.8 3.8 L4.8 10.6Z" fill="#2a9468"/><path d="M2.4 10.6 L4.4 2.6 L5.8 1.8 L7.6 10.6Z" fill="#2f86c6"/><path d="M5.4 10.6 L7.2 2 L8.6 1.2 L9.9 6.5 V10.6Z" fill="#1f9448"/><path d="M.3 .3 H10.1 M.3 .3 V10.7" stroke="#9098ac" stroke-width=".5" fill="none"/></svg></div>
<div class="c ce ok" style="left:237.0px;width:56.2px;">OK</div>
<div class="c ri" style="left:293.2px;width:60.0px;">2h 51m 47s</div>
<div class="c ce" style="left:353.2px;width:100.4px;">05/05/2015 18:33:52</div>
<div class="c ce" style="left:453.6px;width:38.0px;">1/3 (H)</div>
<div class="c l" style="left:491.6px;width:365.5px;border-right:1px solid #dbe2f1">Disk OK - /usr TOTAL: 2.661GB USED: 0.840GB (31%) FREE: 1.820GB (69%)</div>
</div>
<div class="a r r1" style="top:591.52px;height:14.215px;line-height:13.81px">
<div class="c " style="left:0.0px;width:15.6px;border-left-color:#c5cfe6"><span class="cb" style="top:2.71px"></span></div>
<div class="c " style="left:15.6px;width:18.0px;"></div>
<div class="c l" style="left:33.6px;width:58.7px;"></div>
<div class="c " style="left:92.3px;width:8.3px;"></div>
<div class="c l sv" style="left:100.6px;width:92.8px;">Disk_SNMP_var</div>
<div class="c " style="left:193.4px;width:20.9px;"></div>
<div class="c " style="left:214.3px;width:22.7px;"><svg class="g" style="top:1.81px" viewBox="0 0 10.4 11" preserveAspectRatio="none"><rect x=".3" y=".3" width="9.8" height="10.4" fill="#f1f4fa" stroke="#a8b4c8" stroke-width=".5"/><path d="M.5 10.6 V6.8 L2.8 3.8 L4.8 10.6Z" fill="#2a9468"/><path d="M2.4 10.6 L4.4 2.6 L5.8 1.8 L7.6 10.6Z" fill="#2f86c6"/><path d="M5.4 10.6 L7.2 2 L8.6 1.2 L9.9 6.5 V10.6Z" fill="#1f9448"/><path d="M.3 .3 H10.1 M.3 .3 V10.7" stroke="#9098ac" stroke-width=".5" fill="none"/></svg></div>
<div class="c ce ok" style="left:237.0px;width:56.2px;">OK</div>
<div class="c ri" style="left:293.2px;width:60.0px;">2h 51m 47s</div>
<div class="c ce" style="left:353.2px;width:100.4px;">05/05/2015 18:33:53</div>
<div class="c ce" style="left:453.6px;width:38.0px;">1/3 (H)</div>
<div class="c l" style="left:491.6px;width:365.5px;border-right:1px solid #dbe2f1">Disk OK - /var TOTAL: 1.307GB USED: 0.416GB (31%) FREE: 0.891GB (69%)</div>
</div>
<div class="a r r0" style="top:605.73px;height:14.215px;line-height:13.81px">
<div class="c " style="left:0.0px;width:15.6px;border-left-color:#c5cfe6"><span class="cb" style="top:2.71px"></span></div>
<div class="c " style="left:15.6px;width:18.0px;"></div>
<div class="c l" style="left:33.6px;width:58.7px;"></div>
<div class="c " style="left:92.3px;width:8.3px;"></div>
<div class="c l sv" style="left:100.6px;width:92.8px;">LOAD_snmp</div>
<div class="c " style="left:193.4px;width:20.9px;"></div>
<div class="c " style="left:214.3px;width:22.7px;"><svg class="g" style="top:1.81px" viewBox="0 0 10.4 11" preserveAspectRatio="none"><rect x=".3" y=".3" width="9.8" height="10.4" fill="#f1f4fa" stroke="#a8b4c8" stroke-width=".5"/><path d="M.5 10.6 V6.8 L2.8 3.8 L4.8 10.6Z" fill="#2a9468"/><path d="M2.4 10.6 L4.4 2.6 L5.8 1.8 L7.6 10.6Z" fill="#2f86c6"/><path d="M5.4 10.6 L7.2 2 L8.6 1.2 L9.9 6.5 V10.6Z" fill="#1f9448"/><path d="M.3 .3 H10.1 M.3 .3 V10.7" stroke="#9098ac" stroke-width=".5" fill="none"/></svg></div>
<div class="c ce ok" style="left:237.0px;width:56.2px;">OK</div>
<div class="c ri" style="left:293.2px;width:60.0px;">2h 46m 51s</div>
<div class="c ce" style="left:353.2px;width:100.4px;">05/05/2015 18:33:53</div>
<div class="c ce" style="left:453.6px;width:38.0px;">1/3 (H)</div>
<div class="c l" style="left:491.6px;width:365.5px;border-right:1px solid #dbe2f1">Load average: 0.00, 0.01, 0.05.</div>
</div>
<div class="a r r1" style="top:619.95px;height:14.215px;line-height:13.81px">
<div class="c " style="left:0.0px;width:15.6px;border-left-color:#c5cfe6"><span class="cb" style="top:2.71px"></span></div>
<div class="c " style="left:15.6px;width:18.0px;"></div>
<div class="c l" style="left:33.6px;width:58.7px;"></div>
<div class="c " style="left:92.3px;width:8.3px;"></div>
<div class="c l sv" style="left:100.6px;width:92.8px;">Ping-Lan</div>
<div class="c " style="left:193.4px;width:20.9px;"></div>
<div class="c " style="left:214.3px;width:22.7px;"><svg class="g" style="top:1.81px" viewBox="0 0 10.4 11" preserveAspectRatio="none"><rect x=".3" y=".3" width="9.8" height="10.4" fill="#f1f4fa" stroke="#a8b4c8" stroke-width=".5"/><path d="M.5 10.6 V6.8 L2.8 3.8 L4.8 10.6Z" fill="#2a9468"/><path d="M2.4 10.6 L4.4 2.6 L5.8 1.8 L7.6 10.6Z" fill="#2f86c6"/><path d="M5.4 10.6 L7.2 2 L8.6 1.2 L9.9 6.5 V10.6Z" fill="#1f9448"/><path d="M.3 .3 H10.1 M.3 .3 V10.7" stroke="#9098ac" stroke-width=".5" fill="none"/></svg></div>
<div class="c ce ok" style="left:237.0px;width:56.2px;">OK</div>
<div class="c ri" style="left:293.2px;width:60.0px;">2h 46m 51s</div>
<div class="c ce" style="left:353.2px;width:100.4px;">05/05/2015 18:33:54</div>
<div class="c ce" style="left:453.6px;width:38.0px;">1/3 (H)</div>
<div class="c l" style="left:491.6px;width:365.5px;border-right:1px solid #dbe2f1">OK - 172.16.209.51: rta 23,362ms, lost 0%</div>
</div>
<div class="a r r0" style="top:634.16px;height:14.215px;line-height:13.81px">
<div class="c " style="left:0.0px;width:15.6px;border-left-color:#c5cfe6"><span class="cb" style="top:2.71px"></span></div>
<div class="c " style="left:15.6px;width:18.0px;"></div>
<div class="c l" style="left:33.6px;width:58.7px;"></div>
<div class="c " style="left:92.3px;width:8.3px;"></div>
<div class="c l sv" style="left:100.6px;width:92.8px;">Process Apache2</div>
<div class="c " style="left:193.4px;width:20.9px;"></div>
<div class="c " style="left:214.3px;width:22.7px;"><svg class="g" style="top:1.81px" viewBox="0 0 10.4 11" preserveAspectRatio="none"><rect x=".3" y=".3" width="9.8" height="10.4" fill="#f1f4fa" stroke="#a8b4c8" stroke-width=".5"/><path d="M.5 10.6 V6.8 L2.8 3.8 L4.8 10.6Z" fill="#2a9468"/><path d="M2.4 10.6 L4.4 2.6 L5.8 1.8 L7.6 10.6Z" fill="#2f86c6"/><path d="M5.4 10.6 L7.2 2 L8.6 1.2 L9.9 6.5 V10.6Z" fill="#1f9448"/><path d="M.3 .3 H10.1 M.3 .3 V10.7" stroke="#9098ac" stroke-width=".5" fill="none"/></svg></div>
<div class="c ce ok" style="left:237.0px;width:56.2px;">OK</div>
<div class="c ri" style="left:293.2px;width:60.0px;">2h 46m 51s</div>
<div class="c ce" style="left:353.2px;width:100.4px;">05/05/2015 18:33:54</div>
<div class="c ce" style="left:453.6px;width:38.0px;">1/3 (H)</div>
<div class="c l" style="left:491.6px;width:365.5px;border-right:1px solid #dbe2f1">Number of current processes: 7</div>
</div>
<div class="a r r1" style="top:648.38px;height:14.215px;line-height:13.81px">
<div class="c " style="left:0.0px;width:15.6px;border-left-color:#c5cfe6"><span class="cb" style="top:2.71px"></span></div>
<div class="c " style="left:15.6px;width:18.0px;"></div>
<div class="c l" style="left:33.6px;width:58.7px;"></div>
<div class="c " style="left:92.3px;width:8.3px;"></div>
<div class="c l sv" style="left:100.6px;width:92.8px;">Process MYSQL</div>
<div class="c " style="left:193.4px;width:20.9px;"></div>
<div class="c " style="left:214.3px;width:22.7px;"></div>
<div class="c ce ok" style="left:237.0px;width:56.2px;">OK</div>
<div class="c ri" style="left:293.2px;width:60.0px;">2h 46m 51s</div>
<div class="c ce" style="left:353.2px;width:100.4px;">05/05/2015 18:33:54</div>
<div class="c ce" style="left:453.6px;width:38.0px;">1/3 (H)</div>
<div class="c l" style="left:491.6px;width:365.5px;border-right:1px solid #dbe2f1">Process OK - mysqld: runnable</div>
</div>
<div class="a r r0" style="top:662.59px;height:14.215px;line-height:13.81px">
<div class="c " style="left:0.0px;width:15.6px;border-left-color:#c5cfe6"><span class="cb" style="top:2.71px"></span></div>
<div class="c " style="left:15.6px;width:18.0px;"></div>
<div class="c l" style="left:33.6px;width:58.7px;"></div>
<div class="c " style="left:92.3px;width:8.3px;"></div>
<div class="c l sv" style="left:100.6px;width:92.8px;">TCP Apache 80</div>
<div class="c " style="left:193.4px;width:20.9px;"></div>
<div class="c " style="left:214.3px;width:22.7px;"><svg class="g" style="top:1.81px" viewBox="0 0 10.4 11" preserveAspectRatio="none"><rect x=".3" y=".3" width="9.8" height="10.4" fill="#f1f4fa" stroke="#a8b4c8" stroke-width=".5"/><path d="M.5 10.6 V6.8 L2.8 3.8 L4.8 10.6Z" fill="#2a9468"/><path d="M2.4 10.6 L4.4 2.6 L5.8 1.8 L7.6 10.6Z" fill="#2f86c6"/><path d="M5.4 10.6 L7.2 2 L8.6 1.2 L9.9 6.5 V10.6Z" fill="#1f9448"/><path d="M.3 .3 H10.1 M.3 .3 V10.7" stroke="#9098ac" stroke-width=".5" fill="none"/></svg></div>
<div class="c ce ok" style="left:237.0px;width:56.2px;">OK</div>
<div class="c ri" style="left:293.2px;width:60.0px;">2h 49m 3s</div>
<div class="c ce" style="left:353.2px;width:100.4px;">05/05/2015 18:33:54</div>
<div class="c ce" style="left:453.6px;width:38.0px;">1/3 (H)</div>
<div class="c l" style="left:491.6px;width:365.5px;border-right:1px solid #dbe2f1">TCP OK - 0,082 second response time on 172.16.209.51 port 80</div>
</div>
<div class="a r r1" style="top:676.81px;height:14.215px;line-height:13.81px">
<div class="c " style="left:0.0px;width:15.6px;border-left-color:#c5cfe6"><span class="cb" style="top:2.71px"></span></div>
<div class="c " style="left:15.6px;width:18.0px;"></div>
<div class="c l" style="left:33.6px;width:58.7px;"></div>
<div class="c " style="left:92.3px;width:8.3px;"></div>
<div class="c l sv" style="left:100.6px;width:92.8px;">TCP MYSQL</div>
<div class="c " style="left:193.4px;width:20.9px;"></div>
<div class="c " style="left:214.3px;width:22.7px;"><svg class="g" style="top:1.81px" viewBox="0 0 10.4 11" preserveAspectRatio="none"><rect x=".3" y=".3" width="9.8" height="10.4" fill="#f1f4fa" stroke="#a8b4c8" stroke-width=".5"/><path d="M.5 10.6 V6.8 L2.8 3.8 L4.8 10.6Z" fill="#2a9468"/><path d="M2.4 10.6 L4.4 2.6 L5.8 1.8 L7.6 10.6Z" fill="#2f86c6"/><path d="M5.4 10.6 L7.2 2 L8.6 1.2 L9.9 6.5 V10.6Z" fill="#1f9448"/><path d="M.3 .3 H10.1 M.3 .3 V10.7" stroke="#9098ac" stroke-width=".5" fill="none"/></svg></div>
<div class="c ce ok" style="left:237.0px;width:56.2px;">OK</div>
<div class="c ri" style="left:293.2px;width:60.0px;">2h 49m 48s</div>
<div class="c ce" style="left:353.2px;width:100.4px;">05/05/2015 18:33:54</div>
<div class="c ce" style="left:453.6px;width:38.0px;">1/3 (H)</div>
<div class="c l" style="left:491.6px;width:365.5px;border-right:1px solid #dbe2f1">TCP OK - 0,021 second response time on 172.16.209.51 port 3306</div>
</div>
<div class="a r r0" style="top:691.02px;height:14.215px;line-height:13.81px">
<div class="c " style="left:0.0px;width:15.6px;border-left-color:#c5cfe6"><span class="cb" style="top:2.71px"></span></div>
<div class="c " style="left:15.6px;width:18.0px;"></div>
<div class="c l" style="left:33.6px;width:58.7px;"></div>
<div class="c " style="left:92.3px;width:8.3px;"></div>
<div class="c l sv" style="left:100.6px;width:92.8px;">Traffic eth0</div>
<div class="c " style="left:193.4px;width:20.9px;"></div>
<div class="c " style="left:214.3px;width:22.7px;"><svg class="g" style="top:1.81px" viewBox="0 0 10.4 11" preserveAspectRatio="none"><rect x=".3" y=".3" width="9.8" height="10.4" fill="#f1f4fa" stroke="#a8b4c8" stroke-width=".5"/><path d="M.5 10.6 V6.8 L2.8 3.8 L4.8 10.6Z" fill="#2a9468"/><path d="M2.4 10.6 L4.4 2.6 L5.8 1.8 L7.6 10.6Z" fill="#2f86c6"/><path d="M5.4 10.6 L7.2 2 L8.6 1.2 L9.9 6.5 V10.6Z" fill="#1f9448"/><path d="M.3 .3 H10.1 M.3 .3 V10.7" stroke="#9098ac" stroke-width=".5" fill="none"/></svg></div>
<div class="c ce ok" style="left:237.0px;width:56.2px;">OK</div>
<div class="c ri" style="left:293.2px;width:60.0px;">54m 6s</div>
<div class="c ce" style="left:353.2px;width:100.4px;">05/05/2015 18:33:54</div>
<div class="c ce" style="left:453.6px;width:38.0px;">1/3 (H)</div>
<div class="c l" style="left:491.6px;width:365.5px;border-right:1px solid #dbe2f1">Traffic In : 24.99 kb/s (0.0 %), Out : 15.80 kb/s (0.0 %)</div>
</div>
<div class="a r r1" style="top:705.24px;height:14.215px;line-height:13.81px">
<div class="c " style="left:0.0px;width:15.6px;border-left-color:#c5cfe6"><span class="cb" style="top:2.71px"></span></div>
<div class="c " style="left:15.6px;width:18.0px;"></div>
<div class="c l" style="left:33.6px;width:58.7px;"></div>
<div class="c " style="left:92.3px;width:8.3px;"></div>
<div class="c l sv" style="left:100.6px;width:92.8px;">TRAP_LINUX</div>
<div class="c " style="left:193.4px;width:20.9px;"><svg class="t" style="top:2.06px" viewBox="0 0 9.5 9.5"><ellipse cx="2" cy="5.2" rx="1.9" ry="3.1" fill="#b9bccb"/><ellipse cx="6.2" cy="2" rx="2.7" ry="1.7" fill="#cdb6e4"/><circle cx="3.9" cy="2.2" r=".6" fill="#4a3a6a"/><circle cx="8" cy="3" r=".7" fill="#4a3a6a"/><circle cx="2.9" cy="8.1" r=".6" fill="#3a2a5a"/><rect x="4.3" y="4.7" width="4.5" height="4.2" rx=".4" fill="#1f6fd2"/></svg></div>
<div class="c " style="left:214.3px;width:22.7px;"></div>
<div class="c ce wa" style="left:237.0px;width:56.2px;">WARNING</div>
<div class="c ri" style="left:293.2px;width:60.0px;">21s</div>
<div class="c ce" style="left:353.2px;width:100.4px;">05/05/2015 18:34:45</div>
<div class="c ce" style="left:453.6px;width:38.0px;">1/1 (H)</div>
<div class="c l" style="left:491.6px;width:365.5px;border-right:1px solid #dbe2f1">SNMP is restarting</div>
</div>
</div></body></html>
